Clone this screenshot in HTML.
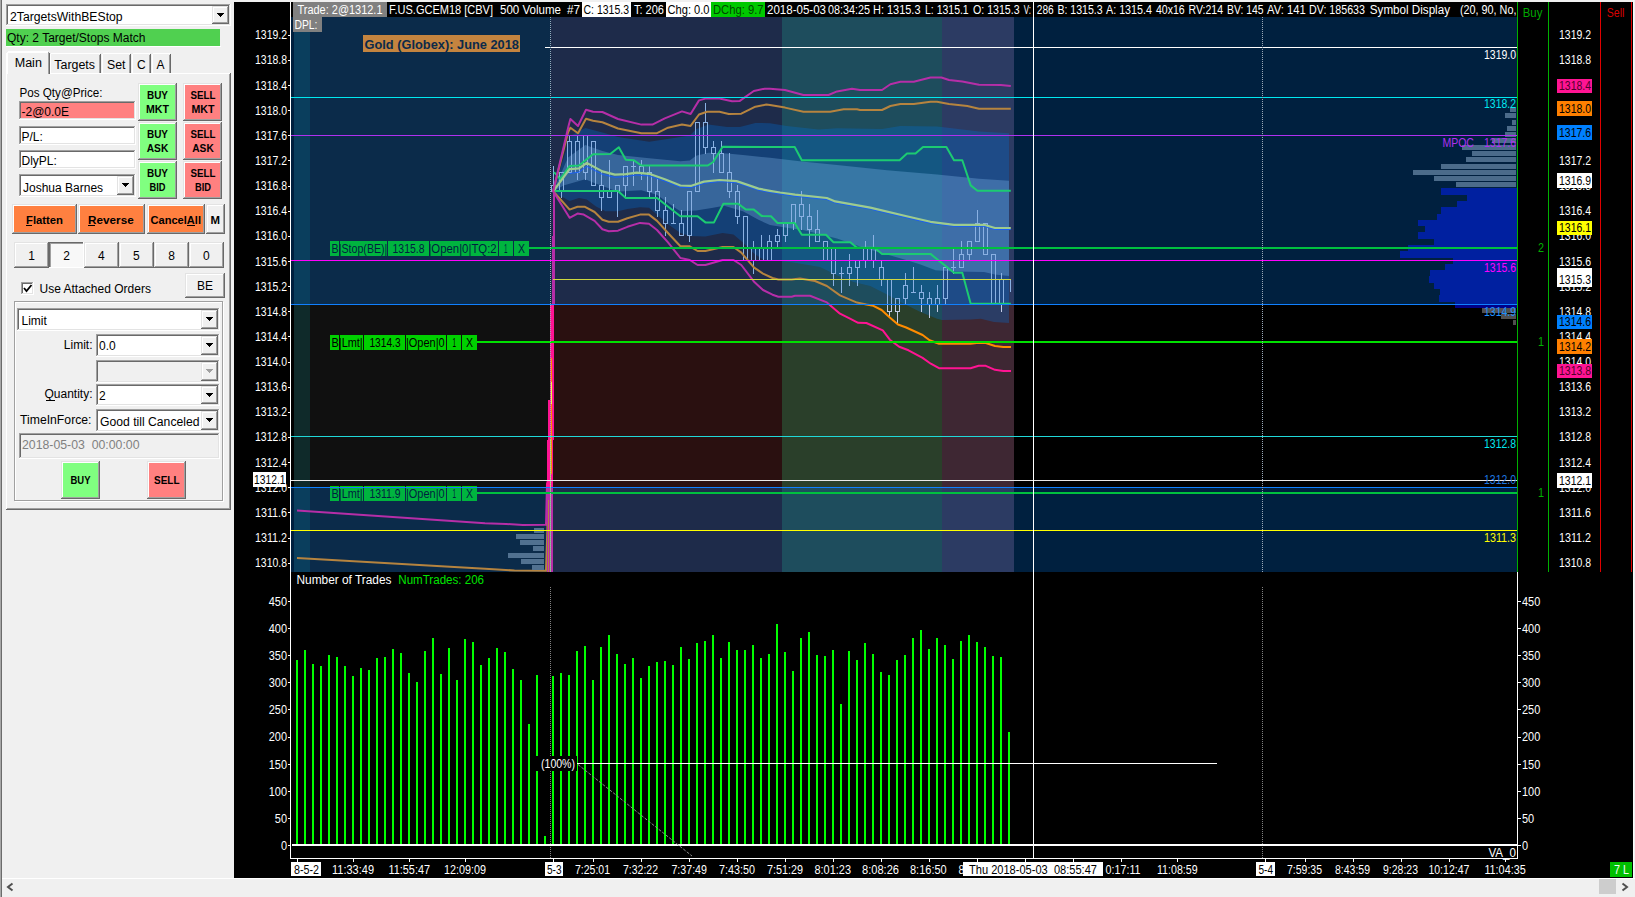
<!DOCTYPE html>
<html lang="en"><head><meta charset="utf-8"><title>Chart Trade</title>
<style>html,body{margin:0;padding:0;background:#f0f0f0;overflow:hidden}body{width:1635px;height:897px;position:relative}svg{position:absolute;left:0;top:0;display:block}text{font-family:"Liberation Sans", sans-serif;white-space:pre}</style></head><body>
<svg width="1635" height="897" viewBox="0 0 1635 897">
<rect x="0" y="0" width="1635" height="897" fill="#f0f0f0"/>
<g shape-rendering="crispEdges">
<rect x="6" y="4" width="225" height="22" fill="#fff"/>
<rect x="6" y="4" width="225" height="1" fill="#a0a0a0"/>
<rect x="6" y="4" width="1" height="22" fill="#a0a0a0"/>
<rect x="7" y="5" width="223" height="1" fill="#696969"/>
<rect x="7" y="5" width="1" height="20" fill="#696969"/>
<rect x="6" y="25" width="225" height="1" fill="#ffffff"/>
<rect x="230" y="4" width="1" height="22" fill="#ffffff"/>
<rect x="7" y="24" width="223" height="1" fill="#e3e3e3"/>
<rect x="229" y="5" width="1" height="20" fill="#e3e3e3"/>
<rect x="212" y="6" width="17" height="18" fill="#f0f0f0"/>
<rect x="212" y="6" width="17" height="1" fill="#e3e3e3"/>
<rect x="212" y="6" width="1" height="18" fill="#e3e3e3"/>
<rect x="213" y="7" width="15" height="1" fill="#ffffff"/>
<rect x="213" y="7" width="1" height="16" fill="#ffffff"/>
<rect x="212" y="23" width="17" height="1" fill="#696969"/>
<rect x="228" y="6" width="1" height="18" fill="#696969"/>
<rect x="213" y="22" width="15" height="1" fill="#a0a0a0"/>
<rect x="227" y="7" width="1" height="16" fill="#a0a0a0"/>
<rect x="217" y="13" width="7" height="1" fill="#000"/>
<rect x="218" y="14" width="5" height="1" fill="#000"/>
<rect x="219" y="15" width="3" height="1" fill="#000"/>
<rect x="220" y="16" width="1" height="1" fill="#000"/>
<rect x="6" y="29" width="214" height="17" fill="#50d050"/>
<rect x="6" y="46" width="215" height="1" fill="#ffffff"/>
<rect x="51" y="53" width="49" height="1" fill="#ffffff"/>
<rect x="50" y="54" width="1" height="19" fill="#ffffff"/>
<rect x="100" y="54" width="1" height="19" fill="#696969"/>
<rect x="99" y="55" width="1" height="18" fill="#a0a0a0"/>
<rect x="103" y="53" width="27" height="1" fill="#ffffff"/>
<rect x="102" y="54" width="1" height="19" fill="#ffffff"/>
<rect x="130" y="54" width="1" height="19" fill="#696969"/>
<rect x="129" y="55" width="1" height="18" fill="#a0a0a0"/>
<rect x="133" y="53" width="17" height="1" fill="#ffffff"/>
<rect x="132" y="54" width="1" height="19" fill="#ffffff"/>
<rect x="150" y="54" width="1" height="19" fill="#696969"/>
<rect x="149" y="55" width="1" height="18" fill="#a0a0a0"/>
<rect x="153" y="53" width="17" height="1" fill="#ffffff"/>
<rect x="152" y="54" width="1" height="19" fill="#ffffff"/>
<rect x="170" y="54" width="1" height="19" fill="#696969"/>
<rect x="169" y="55" width="1" height="18" fill="#a0a0a0"/>
<rect x="6" y="73" width="225" height="1" fill="#ffffff"/>
<rect x="6" y="73" width="1" height="437" fill="#ffffff"/>
<rect x="230" y="73" width="1" height="437" fill="#696969"/>
<rect x="229" y="74" width="1" height="435" fill="#a0a0a0"/>
<rect x="6" y="509" width="225" height="1" fill="#696969"/>
<rect x="7" y="508" width="223" height="1" fill="#a0a0a0"/>
<rect x="6" y="51" width="44" height="23" fill="#f0f0f0"/>
<rect x="8" y="51" width="40" height="1" fill="#ffffff"/>
<rect x="6" y="53" width="1" height="21" fill="#ffffff"/>
<rect x="7" y="52" width="1" height="22" fill="#ffffff"/>
<rect x="7" y="52" width="41" height="1" fill="#ffffff"/>
<rect x="49" y="53" width="1" height="21" fill="#696969"/>
<rect x="48" y="52" width="1" height="22" fill="#a0a0a0"/>
<rect x="19" y="101" width="117" height="19" fill="#ff8080"/>
<rect x="19" y="101" width="117" height="1" fill="#a0a0a0"/>
<rect x="19" y="101" width="1" height="19" fill="#a0a0a0"/>
<rect x="20" y="102" width="115" height="1" fill="#696969"/>
<rect x="20" y="102" width="1" height="17" fill="#696969"/>
<rect x="19" y="119" width="117" height="1" fill="#ffffff"/>
<rect x="135" y="101" width="1" height="19" fill="#ffffff"/>
<rect x="20" y="118" width="115" height="1" fill="#e3e3e3"/>
<rect x="134" y="102" width="1" height="17" fill="#e3e3e3"/>
<rect x="19" y="126" width="117" height="19" fill="#fff"/>
<rect x="19" y="126" width="117" height="1" fill="#a0a0a0"/>
<rect x="19" y="126" width="1" height="19" fill="#a0a0a0"/>
<rect x="20" y="127" width="115" height="1" fill="#696969"/>
<rect x="20" y="127" width="1" height="17" fill="#696969"/>
<rect x="19" y="144" width="117" height="1" fill="#ffffff"/>
<rect x="135" y="126" width="1" height="19" fill="#ffffff"/>
<rect x="20" y="143" width="115" height="1" fill="#e3e3e3"/>
<rect x="134" y="127" width="1" height="17" fill="#e3e3e3"/>
<rect x="19" y="150" width="117" height="19" fill="#fff"/>
<rect x="19" y="150" width="117" height="1" fill="#a0a0a0"/>
<rect x="19" y="150" width="1" height="19" fill="#a0a0a0"/>
<rect x="20" y="151" width="115" height="1" fill="#696969"/>
<rect x="20" y="151" width="1" height="17" fill="#696969"/>
<rect x="19" y="168" width="117" height="1" fill="#ffffff"/>
<rect x="135" y="150" width="1" height="19" fill="#ffffff"/>
<rect x="20" y="167" width="115" height="1" fill="#e3e3e3"/>
<rect x="134" y="151" width="1" height="17" fill="#e3e3e3"/>
<rect x="19" y="174" width="117" height="23" fill="#fff"/>
<rect x="19" y="174" width="117" height="1" fill="#a0a0a0"/>
<rect x="19" y="174" width="1" height="23" fill="#a0a0a0"/>
<rect x="20" y="175" width="115" height="1" fill="#696969"/>
<rect x="20" y="175" width="1" height="21" fill="#696969"/>
<rect x="19" y="196" width="117" height="1" fill="#ffffff"/>
<rect x="135" y="174" width="1" height="23" fill="#ffffff"/>
<rect x="20" y="195" width="115" height="1" fill="#e3e3e3"/>
<rect x="134" y="175" width="1" height="21" fill="#e3e3e3"/>
<rect x="117" y="176" width="17" height="19" fill="#f0f0f0"/>
<rect x="117" y="176" width="17" height="1" fill="#e3e3e3"/>
<rect x="117" y="176" width="1" height="19" fill="#e3e3e3"/>
<rect x="118" y="177" width="15" height="1" fill="#ffffff"/>
<rect x="118" y="177" width="1" height="17" fill="#ffffff"/>
<rect x="117" y="194" width="17" height="1" fill="#696969"/>
<rect x="133" y="176" width="1" height="19" fill="#696969"/>
<rect x="118" y="193" width="15" height="1" fill="#a0a0a0"/>
<rect x="132" y="177" width="1" height="17" fill="#a0a0a0"/>
<rect x="122" y="183" width="7" height="1" fill="#000"/>
<rect x="123" y="184" width="5" height="1" fill="#000"/>
<rect x="124" y="185" width="3" height="1" fill="#000"/>
<rect x="125" y="186" width="1" height="1" fill="#000"/>
<rect x="138" y="83" width="39" height="38" fill="#80ff80"/>
<rect x="138" y="83" width="39" height="1" fill="#e3e3e3"/>
<rect x="138" y="83" width="1" height="38" fill="#e3e3e3"/>
<rect x="139" y="84" width="37" height="1" fill="#ffffff"/>
<rect x="139" y="84" width="1" height="36" fill="#ffffff"/>
<rect x="138" y="120" width="39" height="1" fill="#696969"/>
<rect x="176" y="83" width="1" height="38" fill="#696969"/>
<rect x="139" y="119" width="37" height="1" fill="#a0a0a0"/>
<rect x="175" y="84" width="1" height="36" fill="#a0a0a0"/>
<rect x="183" y="83" width="39" height="38" fill="#ff8080"/>
<rect x="183" y="83" width="39" height="1" fill="#e3e3e3"/>
<rect x="183" y="83" width="1" height="38" fill="#e3e3e3"/>
<rect x="184" y="84" width="37" height="1" fill="#ffffff"/>
<rect x="184" y="84" width="1" height="36" fill="#ffffff"/>
<rect x="183" y="120" width="39" height="1" fill="#696969"/>
<rect x="221" y="83" width="1" height="38" fill="#696969"/>
<rect x="184" y="119" width="37" height="1" fill="#a0a0a0"/>
<rect x="220" y="84" width="1" height="36" fill="#a0a0a0"/>
<rect x="138" y="122" width="39" height="38" fill="#80ff80"/>
<rect x="138" y="122" width="39" height="1" fill="#e3e3e3"/>
<rect x="138" y="122" width="1" height="38" fill="#e3e3e3"/>
<rect x="139" y="123" width="37" height="1" fill="#ffffff"/>
<rect x="139" y="123" width="1" height="36" fill="#ffffff"/>
<rect x="138" y="159" width="39" height="1" fill="#696969"/>
<rect x="176" y="122" width="1" height="38" fill="#696969"/>
<rect x="139" y="158" width="37" height="1" fill="#a0a0a0"/>
<rect x="175" y="123" width="1" height="36" fill="#a0a0a0"/>
<rect x="183" y="122" width="39" height="38" fill="#ff8080"/>
<rect x="183" y="122" width="39" height="1" fill="#e3e3e3"/>
<rect x="183" y="122" width="1" height="38" fill="#e3e3e3"/>
<rect x="184" y="123" width="37" height="1" fill="#ffffff"/>
<rect x="184" y="123" width="1" height="36" fill="#ffffff"/>
<rect x="183" y="159" width="39" height="1" fill="#696969"/>
<rect x="221" y="122" width="1" height="38" fill="#696969"/>
<rect x="184" y="158" width="37" height="1" fill="#a0a0a0"/>
<rect x="220" y="123" width="1" height="36" fill="#a0a0a0"/>
<rect x="138" y="161" width="39" height="38" fill="#80ff80"/>
<rect x="138" y="161" width="39" height="1" fill="#e3e3e3"/>
<rect x="138" y="161" width="1" height="38" fill="#e3e3e3"/>
<rect x="139" y="162" width="37" height="1" fill="#ffffff"/>
<rect x="139" y="162" width="1" height="36" fill="#ffffff"/>
<rect x="138" y="198" width="39" height="1" fill="#696969"/>
<rect x="176" y="161" width="1" height="38" fill="#696969"/>
<rect x="139" y="197" width="37" height="1" fill="#a0a0a0"/>
<rect x="175" y="162" width="1" height="36" fill="#a0a0a0"/>
<rect x="183" y="161" width="39" height="38" fill="#ff8080"/>
<rect x="183" y="161" width="39" height="1" fill="#e3e3e3"/>
<rect x="183" y="161" width="1" height="38" fill="#e3e3e3"/>
<rect x="184" y="162" width="37" height="1" fill="#ffffff"/>
<rect x="184" y="162" width="1" height="36" fill="#ffffff"/>
<rect x="183" y="198" width="39" height="1" fill="#696969"/>
<rect x="221" y="161" width="1" height="38" fill="#696969"/>
<rect x="184" y="197" width="37" height="1" fill="#a0a0a0"/>
<rect x="220" y="162" width="1" height="36" fill="#a0a0a0"/>
<rect x="12" y="204" width="65" height="30" fill="#ff8040"/>
<rect x="12" y="204" width="65" height="1" fill="#e3e3e3"/>
<rect x="12" y="204" width="1" height="30" fill="#e3e3e3"/>
<rect x="13" y="205" width="63" height="1" fill="#ffffff"/>
<rect x="13" y="205" width="1" height="28" fill="#ffffff"/>
<rect x="12" y="233" width="65" height="1" fill="#696969"/>
<rect x="76" y="204" width="1" height="30" fill="#696969"/>
<rect x="13" y="232" width="63" height="1" fill="#a0a0a0"/>
<rect x="75" y="205" width="1" height="28" fill="#a0a0a0"/>
<rect x="78" y="204" width="67" height="30" fill="#ff8040"/>
<rect x="78" y="204" width="67" height="1" fill="#e3e3e3"/>
<rect x="78" y="204" width="1" height="30" fill="#e3e3e3"/>
<rect x="79" y="205" width="65" height="1" fill="#ffffff"/>
<rect x="79" y="205" width="1" height="28" fill="#ffffff"/>
<rect x="78" y="233" width="67" height="1" fill="#696969"/>
<rect x="144" y="204" width="1" height="30" fill="#696969"/>
<rect x="79" y="232" width="65" height="1" fill="#a0a0a0"/>
<rect x="143" y="205" width="1" height="28" fill="#a0a0a0"/>
<rect x="147" y="204" width="58" height="30" fill="#ff8040"/>
<rect x="147" y="204" width="58" height="1" fill="#e3e3e3"/>
<rect x="147" y="204" width="1" height="30" fill="#e3e3e3"/>
<rect x="148" y="205" width="56" height="1" fill="#ffffff"/>
<rect x="148" y="205" width="1" height="28" fill="#ffffff"/>
<rect x="147" y="233" width="58" height="1" fill="#696969"/>
<rect x="204" y="204" width="1" height="30" fill="#696969"/>
<rect x="148" y="232" width="56" height="1" fill="#a0a0a0"/>
<rect x="203" y="205" width="1" height="28" fill="#a0a0a0"/>
<rect x="206" y="204" width="19" height="30" fill="#f0f0f0"/>
<rect x="206" y="204" width="19" height="1" fill="#e3e3e3"/>
<rect x="206" y="204" width="1" height="30" fill="#e3e3e3"/>
<rect x="207" y="205" width="17" height="1" fill="#ffffff"/>
<rect x="207" y="205" width="1" height="28" fill="#ffffff"/>
<rect x="206" y="233" width="19" height="1" fill="#696969"/>
<rect x="224" y="204" width="1" height="30" fill="#696969"/>
<rect x="207" y="232" width="17" height="1" fill="#a0a0a0"/>
<rect x="223" y="205" width="1" height="28" fill="#a0a0a0"/>
<rect x="14" y="242" width="35" height="26" fill="#f0f0f0"/>
<rect x="14" y="242" width="35" height="1" fill="#e3e3e3"/>
<rect x="14" y="242" width="1" height="26" fill="#e3e3e3"/>
<rect x="15" y="243" width="33" height="1" fill="#ffffff"/>
<rect x="15" y="243" width="1" height="24" fill="#ffffff"/>
<rect x="14" y="267" width="35" height="1" fill="#696969"/>
<rect x="48" y="242" width="1" height="26" fill="#696969"/>
<rect x="15" y="266" width="33" height="1" fill="#a0a0a0"/>
<rect x="47" y="243" width="1" height="24" fill="#a0a0a0"/>
<rect x="49" y="242" width="35" height="26" fill="#f8f8f8"/>
<rect x="49" y="242" width="35" height="1" fill="#696969"/>
<rect x="49" y="242" width="1" height="26" fill="#696969"/>
<rect x="50" y="243" width="33" height="1" fill="#a0a0a0"/>
<rect x="50" y="243" width="1" height="24" fill="#a0a0a0"/>
<rect x="49" y="267" width="35" height="1" fill="#ffffff"/>
<rect x="83" y="242" width="1" height="26" fill="#ffffff"/>
<rect x="84" y="242" width="35" height="26" fill="#f0f0f0"/>
<rect x="84" y="242" width="35" height="1" fill="#e3e3e3"/>
<rect x="84" y="242" width="1" height="26" fill="#e3e3e3"/>
<rect x="85" y="243" width="33" height="1" fill="#ffffff"/>
<rect x="85" y="243" width="1" height="24" fill="#ffffff"/>
<rect x="84" y="267" width="35" height="1" fill="#696969"/>
<rect x="118" y="242" width="1" height="26" fill="#696969"/>
<rect x="85" y="266" width="33" height="1" fill="#a0a0a0"/>
<rect x="117" y="243" width="1" height="24" fill="#a0a0a0"/>
<rect x="119" y="242" width="35" height="26" fill="#f0f0f0"/>
<rect x="119" y="242" width="35" height="1" fill="#e3e3e3"/>
<rect x="119" y="242" width="1" height="26" fill="#e3e3e3"/>
<rect x="120" y="243" width="33" height="1" fill="#ffffff"/>
<rect x="120" y="243" width="1" height="24" fill="#ffffff"/>
<rect x="119" y="267" width="35" height="1" fill="#696969"/>
<rect x="153" y="242" width="1" height="26" fill="#696969"/>
<rect x="120" y="266" width="33" height="1" fill="#a0a0a0"/>
<rect x="152" y="243" width="1" height="24" fill="#a0a0a0"/>
<rect x="154" y="242" width="35" height="26" fill="#f0f0f0"/>
<rect x="154" y="242" width="35" height="1" fill="#e3e3e3"/>
<rect x="154" y="242" width="1" height="26" fill="#e3e3e3"/>
<rect x="155" y="243" width="33" height="1" fill="#ffffff"/>
<rect x="155" y="243" width="1" height="24" fill="#ffffff"/>
<rect x="154" y="267" width="35" height="1" fill="#696969"/>
<rect x="188" y="242" width="1" height="26" fill="#696969"/>
<rect x="155" y="266" width="33" height="1" fill="#a0a0a0"/>
<rect x="187" y="243" width="1" height="24" fill="#a0a0a0"/>
<rect x="189" y="242" width="35" height="26" fill="#f0f0f0"/>
<rect x="189" y="242" width="35" height="1" fill="#e3e3e3"/>
<rect x="189" y="242" width="1" height="26" fill="#e3e3e3"/>
<rect x="190" y="243" width="33" height="1" fill="#ffffff"/>
<rect x="190" y="243" width="1" height="24" fill="#ffffff"/>
<rect x="189" y="267" width="35" height="1" fill="#696969"/>
<rect x="223" y="242" width="1" height="26" fill="#696969"/>
<rect x="190" y="266" width="33" height="1" fill="#a0a0a0"/>
<rect x="222" y="243" width="1" height="24" fill="#a0a0a0"/>
<rect x="21" y="282" width="13" height="13" fill="#fff"/>
<rect x="21" y="282" width="13" height="1" fill="#a0a0a0"/>
<rect x="21" y="282" width="1" height="13" fill="#a0a0a0"/>
<rect x="22" y="283" width="11" height="1" fill="#696969"/>
<rect x="22" y="283" width="1" height="11" fill="#696969"/>
<rect x="21" y="294" width="13" height="1" fill="#ffffff"/>
<rect x="33" y="282" width="1" height="13" fill="#ffffff"/>
<rect x="22" y="293" width="11" height="1" fill="#e3e3e3"/>
<rect x="32" y="283" width="1" height="11" fill="#e3e3e3"/>
<rect x="185" y="273" width="40" height="25" fill="#f0f0f0"/>
<rect x="185" y="273" width="40" height="1" fill="#e3e3e3"/>
<rect x="185" y="273" width="1" height="25" fill="#e3e3e3"/>
<rect x="186" y="274" width="38" height="1" fill="#ffffff"/>
<rect x="186" y="274" width="1" height="23" fill="#ffffff"/>
<rect x="185" y="297" width="40" height="1" fill="#696969"/>
<rect x="224" y="273" width="1" height="25" fill="#696969"/>
<rect x="186" y="296" width="38" height="1" fill="#a0a0a0"/>
<rect x="223" y="274" width="1" height="23" fill="#a0a0a0"/>
<rect x="15" y="302" width="209" height="1" fill="#ffffff"/>
<rect x="15" y="501" width="209" height="1" fill="#ffffff"/>
<rect x="15" y="302" width="1" height="200" fill="#ffffff"/>
<rect x="223" y="302" width="1" height="200" fill="#ffffff"/>
<rect x="14" y="301" width="209" height="1" fill="#a0a0a0"/>
<rect x="14" y="500" width="209" height="1" fill="#a0a0a0"/>
<rect x="14" y="301" width="1" height="200" fill="#a0a0a0"/>
<rect x="222" y="301" width="1" height="200" fill="#a0a0a0"/>
<rect x="17" y="308" width="203" height="23" fill="#fff"/>
<rect x="17" y="308" width="203" height="1" fill="#a0a0a0"/>
<rect x="17" y="308" width="1" height="23" fill="#a0a0a0"/>
<rect x="18" y="309" width="201" height="1" fill="#696969"/>
<rect x="18" y="309" width="1" height="21" fill="#696969"/>
<rect x="17" y="330" width="203" height="1" fill="#ffffff"/>
<rect x="219" y="308" width="1" height="23" fill="#ffffff"/>
<rect x="18" y="329" width="201" height="1" fill="#e3e3e3"/>
<rect x="218" y="309" width="1" height="21" fill="#e3e3e3"/>
<rect x="201" y="310" width="17" height="19" fill="#f0f0f0"/>
<rect x="201" y="310" width="17" height="1" fill="#e3e3e3"/>
<rect x="201" y="310" width="1" height="19" fill="#e3e3e3"/>
<rect x="202" y="311" width="15" height="1" fill="#ffffff"/>
<rect x="202" y="311" width="1" height="17" fill="#ffffff"/>
<rect x="201" y="328" width="17" height="1" fill="#696969"/>
<rect x="217" y="310" width="1" height="19" fill="#696969"/>
<rect x="202" y="327" width="15" height="1" fill="#a0a0a0"/>
<rect x="216" y="311" width="1" height="17" fill="#a0a0a0"/>
<rect x="206" y="317" width="7" height="1" fill="#000"/>
<rect x="207" y="318" width="5" height="1" fill="#000"/>
<rect x="208" y="319" width="3" height="1" fill="#000"/>
<rect x="209" y="320" width="1" height="1" fill="#000"/>
<rect x="96" y="334" width="124" height="23" fill="#fff"/>
<rect x="96" y="334" width="124" height="1" fill="#a0a0a0"/>
<rect x="96" y="334" width="1" height="23" fill="#a0a0a0"/>
<rect x="97" y="335" width="122" height="1" fill="#696969"/>
<rect x="97" y="335" width="1" height="21" fill="#696969"/>
<rect x="96" y="356" width="124" height="1" fill="#ffffff"/>
<rect x="219" y="334" width="1" height="23" fill="#ffffff"/>
<rect x="97" y="355" width="122" height="1" fill="#e3e3e3"/>
<rect x="218" y="335" width="1" height="21" fill="#e3e3e3"/>
<rect x="201" y="336" width="17" height="19" fill="#f0f0f0"/>
<rect x="201" y="336" width="17" height="1" fill="#e3e3e3"/>
<rect x="201" y="336" width="1" height="19" fill="#e3e3e3"/>
<rect x="202" y="337" width="15" height="1" fill="#ffffff"/>
<rect x="202" y="337" width="1" height="17" fill="#ffffff"/>
<rect x="201" y="354" width="17" height="1" fill="#696969"/>
<rect x="217" y="336" width="1" height="19" fill="#696969"/>
<rect x="202" y="353" width="15" height="1" fill="#a0a0a0"/>
<rect x="216" y="337" width="1" height="17" fill="#a0a0a0"/>
<rect x="206" y="343" width="7" height="1" fill="#000"/>
<rect x="207" y="344" width="5" height="1" fill="#000"/>
<rect x="208" y="345" width="3" height="1" fill="#000"/>
<rect x="209" y="346" width="1" height="1" fill="#000"/>
<rect x="96" y="360" width="124" height="23" fill="#f0f0f0"/>
<rect x="96" y="360" width="124" height="1" fill="#a0a0a0"/>
<rect x="96" y="360" width="1" height="23" fill="#a0a0a0"/>
<rect x="97" y="361" width="122" height="1" fill="#696969"/>
<rect x="97" y="361" width="1" height="21" fill="#696969"/>
<rect x="96" y="382" width="124" height="1" fill="#ffffff"/>
<rect x="219" y="360" width="1" height="23" fill="#ffffff"/>
<rect x="97" y="381" width="122" height="1" fill="#e3e3e3"/>
<rect x="218" y="361" width="1" height="21" fill="#e3e3e3"/>
<rect x="201" y="362" width="17" height="19" fill="#f0f0f0"/>
<rect x="201" y="362" width="17" height="1" fill="#e3e3e3"/>
<rect x="201" y="362" width="1" height="19" fill="#e3e3e3"/>
<rect x="202" y="363" width="15" height="1" fill="#ffffff"/>
<rect x="202" y="363" width="1" height="17" fill="#ffffff"/>
<rect x="201" y="380" width="17" height="1" fill="#696969"/>
<rect x="217" y="362" width="1" height="19" fill="#696969"/>
<rect x="202" y="379" width="15" height="1" fill="#a0a0a0"/>
<rect x="216" y="363" width="1" height="17" fill="#a0a0a0"/>
<rect x="206" y="369" width="7" height="1" fill="#a0a0a0"/>
<rect x="207" y="370" width="5" height="1" fill="#a0a0a0"/>
<rect x="208" y="371" width="3" height="1" fill="#a0a0a0"/>
<rect x="209" y="372" width="1" height="1" fill="#a0a0a0"/>
<rect x="96" y="384" width="124" height="22" fill="#fff"/>
<rect x="96" y="384" width="124" height="1" fill="#a0a0a0"/>
<rect x="96" y="384" width="1" height="22" fill="#a0a0a0"/>
<rect x="97" y="385" width="122" height="1" fill="#696969"/>
<rect x="97" y="385" width="1" height="20" fill="#696969"/>
<rect x="96" y="405" width="124" height="1" fill="#ffffff"/>
<rect x="219" y="384" width="1" height="22" fill="#ffffff"/>
<rect x="97" y="404" width="122" height="1" fill="#e3e3e3"/>
<rect x="218" y="385" width="1" height="20" fill="#e3e3e3"/>
<rect x="201" y="386" width="17" height="18" fill="#f0f0f0"/>
<rect x="201" y="386" width="17" height="1" fill="#e3e3e3"/>
<rect x="201" y="386" width="1" height="18" fill="#e3e3e3"/>
<rect x="202" y="387" width="15" height="1" fill="#ffffff"/>
<rect x="202" y="387" width="1" height="16" fill="#ffffff"/>
<rect x="201" y="403" width="17" height="1" fill="#696969"/>
<rect x="217" y="386" width="1" height="18" fill="#696969"/>
<rect x="202" y="402" width="15" height="1" fill="#a0a0a0"/>
<rect x="216" y="387" width="1" height="16" fill="#a0a0a0"/>
<rect x="206" y="393" width="7" height="1" fill="#000"/>
<rect x="207" y="394" width="5" height="1" fill="#000"/>
<rect x="208" y="395" width="3" height="1" fill="#000"/>
<rect x="209" y="396" width="1" height="1" fill="#000"/>
<rect x="96" y="409" width="124" height="23" fill="#fff"/>
<rect x="96" y="409" width="124" height="1" fill="#a0a0a0"/>
<rect x="96" y="409" width="1" height="23" fill="#a0a0a0"/>
<rect x="97" y="410" width="122" height="1" fill="#696969"/>
<rect x="97" y="410" width="1" height="21" fill="#696969"/>
<rect x="96" y="431" width="124" height="1" fill="#ffffff"/>
<rect x="219" y="409" width="1" height="23" fill="#ffffff"/>
<rect x="97" y="430" width="122" height="1" fill="#e3e3e3"/>
<rect x="218" y="410" width="1" height="21" fill="#e3e3e3"/>
<rect x="201" y="411" width="17" height="19" fill="#f0f0f0"/>
<rect x="201" y="411" width="17" height="1" fill="#e3e3e3"/>
<rect x="201" y="411" width="1" height="19" fill="#e3e3e3"/>
<rect x="202" y="412" width="15" height="1" fill="#ffffff"/>
<rect x="202" y="412" width="1" height="17" fill="#ffffff"/>
<rect x="201" y="429" width="17" height="1" fill="#696969"/>
<rect x="217" y="411" width="1" height="19" fill="#696969"/>
<rect x="202" y="428" width="15" height="1" fill="#a0a0a0"/>
<rect x="216" y="412" width="1" height="17" fill="#a0a0a0"/>
<rect x="206" y="418" width="7" height="1" fill="#000"/>
<rect x="207" y="419" width="5" height="1" fill="#000"/>
<rect x="208" y="420" width="3" height="1" fill="#000"/>
<rect x="209" y="421" width="1" height="1" fill="#000"/>
<rect x="19" y="433" width="201" height="26" fill="#f0f0f0"/>
<rect x="19" y="433" width="201" height="1" fill="#a0a0a0"/>
<rect x="19" y="433" width="1" height="26" fill="#a0a0a0"/>
<rect x="20" y="434" width="199" height="1" fill="#696969"/>
<rect x="20" y="434" width="1" height="24" fill="#696969"/>
<rect x="19" y="458" width="201" height="1" fill="#ffffff"/>
<rect x="219" y="433" width="1" height="26" fill="#ffffff"/>
<rect x="20" y="457" width="199" height="1" fill="#e3e3e3"/>
<rect x="218" y="434" width="1" height="24" fill="#e3e3e3"/>
<rect x="61" y="461" width="39" height="38" fill="#80ff80"/>
<rect x="61" y="461" width="39" height="1" fill="#e3e3e3"/>
<rect x="61" y="461" width="1" height="38" fill="#e3e3e3"/>
<rect x="62" y="462" width="37" height="1" fill="#ffffff"/>
<rect x="62" y="462" width="1" height="36" fill="#ffffff"/>
<rect x="61" y="498" width="39" height="1" fill="#696969"/>
<rect x="99" y="461" width="1" height="38" fill="#696969"/>
<rect x="62" y="497" width="37" height="1" fill="#a0a0a0"/>
<rect x="98" y="462" width="1" height="36" fill="#a0a0a0"/>
<rect x="147" y="461" width="39" height="38" fill="#ff8080"/>
<rect x="147" y="461" width="39" height="1" fill="#e3e3e3"/>
<rect x="147" y="461" width="1" height="38" fill="#e3e3e3"/>
<rect x="148" y="462" width="37" height="1" fill="#ffffff"/>
<rect x="148" y="462" width="1" height="36" fill="#ffffff"/>
<rect x="147" y="498" width="39" height="1" fill="#696969"/>
<rect x="185" y="461" width="1" height="38" fill="#696969"/>
<rect x="148" y="497" width="37" height="1" fill="#a0a0a0"/>
<rect x="184" y="462" width="1" height="36" fill="#a0a0a0"/>
<rect x="0" y="878" width="1635" height="19" fill="#f0f0f0"/>
<rect x="1599" y="879" width="17" height="15" fill="#cdcdcd"/>
<rect x="0" y="878" width="1635" height="1" fill="#ffffff"/>
<rect x="1633" y="0" width="1" height="878" fill="#fafafa"/>
<rect x="0" y="0" width="1" height="897" fill="#a8a8a8"/>
<rect x="1" y="0" width="1" height="897" fill="#6c6c6c"/>
</g>
<path d="M24 288 l2.5 3 l5 -6" stroke="#000" stroke-width="1.8" fill="none"/>
<path d="M12.5 883.5 l-4.5 3.5 l4.5 3.5" stroke="#505050" stroke-width="2" fill="none"/>
<path d="M1622.5 883.5 l4.5 3.5 l-4.5 3.5" stroke="#505050" stroke-width="2" fill="none"/>
<text x="10" y="21" fill="#000000" font-size="12" textLength="112.6" lengthAdjust="spacingAndGlyphs">2TargetsWithBEStop</text>
<text x="7" y="42" fill="#000000" font-size="12">Qty: 2 Target/Stops Match</text>
<text x="14.7" y="67" fill="#000000" font-size="12" textLength="27.2" lengthAdjust="spacingAndGlyphs">Main</text>
<text x="54.3" y="69" fill="#000000" font-size="12" textLength="40.7" lengthAdjust="spacingAndGlyphs">Targets</text>
<text x="107" y="69" fill="#000000" font-size="12" textLength="18.5" lengthAdjust="spacingAndGlyphs">Set</text>
<text x="137" y="69" fill="#000000" font-size="12">C</text>
<text x="156.5" y="69" fill="#000000" font-size="12">A</text>
<text x="19.5" y="97" fill="#000000" font-size="12" textLength="83" lengthAdjust="spacingAndGlyphs">Pos Qty@Price:</text>
<text x="21.5" y="116" fill="#000000" font-size="12">-2@0.0E</text>
<text x="21.5" y="141" fill="#000000" font-size="12">P/L:</text>
<text x="21.5" y="165" fill="#000000" font-size="12">DlyPL:</text>
<text x="23" y="191.5" fill="#000000" font-size="12">Joshua Barnes</text>
<text x="157.5" y="99.2" fill="#000000" font-size="11" text-anchor="middle" font-weight="bold" textLength="21" lengthAdjust="spacingAndGlyphs">BUY</text>
<text x="157.5" y="112.8" fill="#000000" font-size="11" text-anchor="middle" font-weight="bold" textLength="23" lengthAdjust="spacingAndGlyphs">MKT</text>
<text x="203" y="99.2" fill="#000000" font-size="11" text-anchor="middle" font-weight="bold" textLength="25" lengthAdjust="spacingAndGlyphs">SELL</text>
<text x="203" y="112.8" fill="#000000" font-size="11" text-anchor="middle" font-weight="bold" textLength="23" lengthAdjust="spacingAndGlyphs">MKT</text>
<text x="157.5" y="138.2" fill="#000000" font-size="11" text-anchor="middle" font-weight="bold" textLength="21" lengthAdjust="spacingAndGlyphs">BUY</text>
<text x="157.5" y="151.79999999999998" fill="#000000" font-size="11" text-anchor="middle" font-weight="bold" textLength="21.5" lengthAdjust="spacingAndGlyphs">ASK</text>
<text x="203" y="138.2" fill="#000000" font-size="11" text-anchor="middle" font-weight="bold" textLength="25" lengthAdjust="spacingAndGlyphs">SELL</text>
<text x="203" y="151.79999999999998" fill="#000000" font-size="11" text-anchor="middle" font-weight="bold" textLength="21.5" lengthAdjust="spacingAndGlyphs">ASK</text>
<text x="157.5" y="177.2" fill="#000000" font-size="11" text-anchor="middle" font-weight="bold" textLength="21" lengthAdjust="spacingAndGlyphs">BUY</text>
<text x="157.5" y="190.79999999999998" fill="#000000" font-size="11" text-anchor="middle" font-weight="bold" textLength="16" lengthAdjust="spacingAndGlyphs">BID</text>
<text x="203" y="177.2" fill="#000000" font-size="11" text-anchor="middle" font-weight="bold" textLength="25" lengthAdjust="spacingAndGlyphs">SELL</text>
<text x="203" y="190.79999999999998" fill="#000000" font-size="11" text-anchor="middle" font-weight="bold" textLength="16" lengthAdjust="spacingAndGlyphs">BID</text>
<text x="26" y="223.5" fill="#000000" font-size="11.5" font-weight="bold" textLength="37" lengthAdjust="spacingAndGlyphs">Flatten</text>
<text x="88" y="223.5" fill="#000000" font-size="11.5" font-weight="bold" textLength="45.7" lengthAdjust="spacingAndGlyphs">Reverse</text>
<text x="150.5" y="223.5" fill="#000000" font-size="11.5" font-weight="bold" textLength="50.5" lengthAdjust="spacingAndGlyphs">CancelAll</text>
<text x="210.5" y="223.5" fill="#000000" font-size="11.5" font-weight="bold" textLength="9.5" lengthAdjust="spacingAndGlyphs">M</text>
<g shape-rendering="crispEdges">
<rect x="26" y="225" width="6" height="1" fill="#000000"/>
<rect x="88" y="225" width="7" height="1" fill="#000000"/>
<rect x="187" y="225" width="8" height="1" fill="#000000"/>
<rect x="46" y="400" width="9" height="1" fill="#000000"/>
</g>
<text x="31.6" y="259.8" fill="#000000" font-size="12" text-anchor="middle">1</text>
<text x="66.5" y="259.8" fill="#000000" font-size="12" text-anchor="middle">2</text>
<text x="101.4" y="259.8" fill="#000000" font-size="12" text-anchor="middle">4</text>
<text x="136.4" y="259.8" fill="#000000" font-size="12" text-anchor="middle">5</text>
<text x="171.5" y="259.8" fill="#000000" font-size="12" text-anchor="middle">8</text>
<text x="206.4" y="259.8" fill="#000000" font-size="12" text-anchor="middle">0</text>
<text x="39.5" y="293" fill="#000000" font-size="12">Use Attached Orders</text>
<text x="205" y="290" fill="#000000" font-size="12" text-anchor="middle">BE</text>
<text x="21.5" y="325" fill="#000000" font-size="12">Limit</text>
<text x="92.5" y="349.3" fill="#000000" font-size="12" text-anchor="end">Limit:</text>
<text x="99" y="350" fill="#000000" font-size="12">0.0</text>
<text x="92.5" y="398.4" fill="#000000" font-size="12" text-anchor="end">Quantity:</text>
<text x="99" y="399.5" fill="#000000" font-size="12">2</text>
<text x="20" y="424.3" fill="#000000" font-size="12" textLength="71.5" lengthAdjust="spacingAndGlyphs">TimeInForce:</text>
<text x="100" y="425.5" fill="#000000" font-size="12" textLength="99.5" lengthAdjust="spacingAndGlyphs">Good till Canceled</text>
<text x="22" y="449" fill="#808080" font-size="12" textLength="117.5" lengthAdjust="spacingAndGlyphs">2018-05-03  00:00:00</text>
<text x="80.5" y="484" fill="#000000" font-size="11" text-anchor="middle" font-weight="bold" textLength="20" lengthAdjust="spacingAndGlyphs">BUY</text>
<text x="166.8" y="484" fill="#000000" font-size="11" text-anchor="middle" font-weight="bold" textLength="25.5" lengthAdjust="spacingAndGlyphs">SELL</text>
<g shape-rendering="crispEdges">
<rect x="234" y="2" width="1399" height="876" fill="#000"/>
<rect x="294" y="17" width="16" height="555" fill="rgb(15,42,42)"/>
<rect x="310" y="17" width="241" height="555" fill="rgb(16,16,16)"/>
<rect x="551" y="17" width="231" height="555" fill="rgb(42,16,16)"/>
<rect x="782" y="17" width="160" height="555" fill="rgb(42,63,42)"/>
<rect x="942" y="17" width="72" height="555" fill="rgb(62,39,51)"/>
</g>
<clipPath id="cp"><rect x="291" y="17" width="1226" height="555"/></clipPath>
<g clip-path="url(#cp)">
<polygon points="553.0,191.7 563.0,160.0 571.2,135.5 585.3,128.0 602.4,132.4 618.0,137.1 649.2,141.8 680.4,137.1 689.8,135.5 696.0,129.3 708.5,124.6 727.3,127.0 739.8,127.0 755.4,123.0 770.0,123.2 786.7,126.0 818.5,129.4 837.0,128.2 882.0,128.9 900.4,126.0 937.0,126.5 954.0,128.5 979.0,131.5 1009.0,133.2 1009.0,323.0 1009.0,323.0 994.0,322.0 980.7,318.8 970.7,319.6 942.0,320.0 937.0,318.8 920.5,312.0 903.8,303.7 887.0,294.5 870.3,286.0 853.6,282.0 837.0,275.3 820.0,267.0 791.7,262.2 770.0,260.0 763.0,259.6 753.8,253.3 742.9,242.4 733.5,234.6 722.6,233.0 705.4,236.5 689.8,235.9 680.4,233.0 669.5,225.3 658.6,215.9 649.0,207.8 640.0,207.3 627.4,208.9 618.0,211.2 605.5,211.2 596.0,206.5 586.8,199.5 579.0,198.0 569.6,201.0 553.0,191.7" fill="rgba(0,112,220,0.30)"/>
<polygon points="553.0,191.7 568.0,157.4 585.3,144.9 602.4,151.1 618.0,155.0 649.2,158.2 680.4,161.3 689.8,160.5 696.0,155.8 708.5,152.7 727.3,153.5 742.9,155.0 770.0,157.8 801.8,161.6 837.0,165.0 887.0,170.3 937.0,174.5 979.0,178.7 1009.0,180.7 1009.0,276.0 1009.0,276.0 995.0,274.4 984.0,272.0 954.0,271.6 935.6,270.3 920.5,264.4 907.0,260.2 887.0,254.4 863.6,247.7 837.0,238.5 803.4,230.0 791.7,228.5 770.0,225.0 758.5,219.8 742.9,211.2 724.1,205.7 711.7,208.0 696.0,210.4 680.4,211.2 674.2,207.3 657.0,194.8 641.4,190.2 627.4,190.9 618.0,191.7 593.0,182.4 585.3,179.2 563.4,185.5 553.0,191.7" fill="rgba(190,225,255,0.30)"/>
<polyline points="297,510.4 485,523.2 506,524 522.7,525 546,524.8 547,484 551,470" fill="none" stroke="#ff1493" stroke-width="2"/>
<polyline points="297,558 485,568.8 514.5,570.5 546,570.7 547.5,525 551,500" fill="none" stroke="#ff8c00" stroke-width="2"/>
<g shape-rendering="crispEdges">
<rect x="553" y="191" width="2" height="45" fill="#ff1493"/>
<rect x="552" y="236" width="3" height="68" fill="#ff1493"/>
<rect x="550" y="304" width="4" height="96" fill="#ff1493"/>
<rect x="548" y="400" width="6" height="40" fill="#ff1493"/>
<rect x="547" y="440" width="6" height="132" fill="#ff1493"/>
<rect x="551" y="358" width="1" height="116" fill="#ff8c00"/>
<rect x="551" y="382" width="1" height="22" fill="#f0f040"/>
<rect x="550" y="440" width="1" height="132" fill="#c8e060"/>
<rect x="548" y="500" width="1" height="72" fill="#ff8c00"/>
</g>
<g shape-rendering="crispEdges" fill="#c2cce6">
<rect x="553" y="166" width="1" height="19"/>
<rect x="551" y="185" width="5" height="1"/>
<rect x="551" y="191" width="5" height="1"/>
<rect x="551" y="185" width="1" height="6"/>
<rect x="555" y="185" width="1" height="6"/>
<rect x="561" y="191" width="1" height="7"/>
<rect x="559" y="172" width="5" height="1"/>
<rect x="559" y="191" width="5" height="1"/>
<rect x="559" y="172" width="1" height="19"/>
<rect x="563" y="172" width="1" height="19"/>
<rect x="569" y="135" width="1" height="6"/>
<rect x="567" y="141" width="5" height="1"/>
<rect x="567" y="172" width="5" height="1"/>
<rect x="567" y="141" width="1" height="31"/>
<rect x="571" y="141" width="1" height="31"/>
<rect x="577" y="135" width="1" height="6"/>
<rect x="577" y="172" width="1" height="8"/>
<rect x="575" y="141" width="5" height="1"/>
<rect x="575" y="172" width="5" height="1"/>
<rect x="575" y="141" width="1" height="31"/>
<rect x="579" y="141" width="1" height="31"/>
<rect x="585" y="172" width="1" height="8"/>
<rect x="583" y="135" width="5" height="1"/>
<rect x="583" y="172" width="5" height="1"/>
<rect x="583" y="135" width="1" height="37"/>
<rect x="587" y="135" width="1" height="37"/>
<rect x="591" y="141" width="5" height="1"/>
<rect x="591" y="185" width="5" height="1"/>
<rect x="591" y="141" width="1" height="44"/>
<rect x="595" y="141" width="1" height="44"/>
<rect x="601" y="172" width="1" height="13"/>
<rect x="601" y="197" width="1" height="14"/>
<rect x="599" y="185" width="5" height="1"/>
<rect x="599" y="197" width="5" height="1"/>
<rect x="599" y="185" width="1" height="12"/>
<rect x="603" y="185" width="1" height="12"/>
<rect x="609" y="160" width="1" height="31"/>
<rect x="607" y="191" width="5" height="1"/>
<rect x="607" y="197" width="5" height="1"/>
<rect x="607" y="191" width="1" height="6"/>
<rect x="611" y="191" width="1" height="6"/>
<rect x="617" y="191" width="1" height="26"/>
<rect x="615" y="185" width="5" height="1"/>
<rect x="615" y="191" width="5" height="1"/>
<rect x="615" y="185" width="1" height="6"/>
<rect x="619" y="185" width="1" height="6"/>
<rect x="625" y="185" width="1" height="13"/>
<rect x="623" y="166" width="5" height="1"/>
<rect x="623" y="185" width="5" height="1"/>
<rect x="623" y="166" width="1" height="19"/>
<rect x="627" y="166" width="1" height="19"/>
<rect x="633" y="160" width="1" height="6"/>
<rect x="633" y="166" width="1" height="20"/>
<rect x="631" y="166" width="5" height="1"/>
<rect x="641" y="160" width="1" height="6"/>
<rect x="641" y="172" width="1" height="8"/>
<rect x="639" y="166" width="5" height="1"/>
<rect x="639" y="172" width="5" height="1"/>
<rect x="639" y="166" width="1" height="6"/>
<rect x="643" y="166" width="1" height="6"/>
<rect x="649" y="166" width="1" height="6"/>
<rect x="649" y="191" width="1" height="7"/>
<rect x="647" y="172" width="5" height="1"/>
<rect x="647" y="191" width="5" height="1"/>
<rect x="647" y="172" width="1" height="19"/>
<rect x="651" y="172" width="1" height="19"/>
<rect x="657" y="179" width="1" height="12"/>
<rect x="657" y="210" width="1" height="7"/>
<rect x="655" y="191" width="5" height="1"/>
<rect x="655" y="210" width="5" height="1"/>
<rect x="655" y="191" width="1" height="19"/>
<rect x="659" y="191" width="1" height="19"/>
<rect x="665" y="197" width="1" height="13"/>
<rect x="665" y="223" width="1" height="13"/>
<rect x="663" y="210" width="5" height="1"/>
<rect x="663" y="223" width="5" height="1"/>
<rect x="663" y="210" width="1" height="13"/>
<rect x="667" y="210" width="1" height="13"/>
<rect x="673" y="204" width="1" height="19"/>
<rect x="671" y="223" width="5" height="1"/>
<rect x="681" y="210" width="1" height="13"/>
<rect x="679" y="223" width="5" height="1"/>
<rect x="679" y="235" width="5" height="1"/>
<rect x="679" y="223" width="1" height="12"/>
<rect x="683" y="223" width="1" height="12"/>
<rect x="689" y="235" width="1" height="7"/>
<rect x="687" y="191" width="5" height="1"/>
<rect x="687" y="235" width="5" height="1"/>
<rect x="687" y="191" width="1" height="44"/>
<rect x="691" y="191" width="1" height="44"/>
<rect x="695" y="122" width="5" height="1"/>
<rect x="695" y="191" width="5" height="1"/>
<rect x="695" y="122" width="1" height="69"/>
<rect x="699" y="122" width="1" height="69"/>
<rect x="705" y="103" width="1" height="19"/>
<rect x="705" y="147" width="1" height="7"/>
<rect x="703" y="122" width="5" height="1"/>
<rect x="703" y="147" width="5" height="1"/>
<rect x="703" y="122" width="1" height="25"/>
<rect x="707" y="122" width="1" height="25"/>
<rect x="713" y="141" width="1" height="6"/>
<rect x="713" y="153" width="1" height="20"/>
<rect x="711" y="147" width="5" height="1"/>
<rect x="711" y="153" width="5" height="1"/>
<rect x="711" y="147" width="1" height="6"/>
<rect x="715" y="147" width="1" height="6"/>
<rect x="721" y="141" width="1" height="12"/>
<rect x="719" y="153" width="5" height="1"/>
<rect x="719" y="172" width="5" height="1"/>
<rect x="719" y="153" width="1" height="19"/>
<rect x="723" y="153" width="1" height="19"/>
<rect x="729" y="153" width="1" height="19"/>
<rect x="729" y="191" width="1" height="7"/>
<rect x="727" y="172" width="5" height="1"/>
<rect x="727" y="191" width="5" height="1"/>
<rect x="727" y="172" width="1" height="19"/>
<rect x="731" y="172" width="1" height="19"/>
<rect x="737" y="185" width="1" height="6"/>
<rect x="737" y="216" width="1" height="8"/>
<rect x="735" y="191" width="5" height="1"/>
<rect x="735" y="216" width="5" height="1"/>
<rect x="735" y="191" width="1" height="25"/>
<rect x="739" y="191" width="1" height="25"/>
<rect x="743" y="216" width="5" height="1"/>
<rect x="743" y="260" width="5" height="1"/>
<rect x="743" y="216" width="1" height="44"/>
<rect x="747" y="216" width="1" height="44"/>
<rect x="753" y="241" width="1" height="7"/>
<rect x="753" y="260" width="1" height="14"/>
<rect x="751" y="248" width="5" height="1"/>
<rect x="751" y="260" width="5" height="1"/>
<rect x="751" y="248" width="1" height="12"/>
<rect x="755" y="248" width="1" height="12"/>
<rect x="761" y="235" width="1" height="13"/>
<rect x="759" y="248" width="5" height="1"/>
<rect x="759" y="260" width="5" height="1"/>
<rect x="759" y="248" width="1" height="12"/>
<rect x="763" y="248" width="1" height="12"/>
<rect x="769" y="235" width="1" height="6"/>
<rect x="767" y="241" width="5" height="1"/>
<rect x="767" y="260" width="5" height="1"/>
<rect x="767" y="241" width="1" height="19"/>
<rect x="771" y="241" width="1" height="19"/>
<rect x="777" y="229" width="1" height="6"/>
<rect x="777" y="241" width="1" height="8"/>
<rect x="775" y="235" width="5" height="1"/>
<rect x="775" y="241" width="5" height="1"/>
<rect x="775" y="235" width="1" height="6"/>
<rect x="779" y="235" width="1" height="6"/>
<rect x="785" y="235" width="1" height="7"/>
<rect x="783" y="223" width="5" height="1"/>
<rect x="783" y="235" width="5" height="1"/>
<rect x="783" y="223" width="1" height="12"/>
<rect x="787" y="223" width="1" height="12"/>
<rect x="793" y="223" width="1" height="7"/>
<rect x="791" y="204" width="5" height="1"/>
<rect x="791" y="223" width="5" height="1"/>
<rect x="791" y="204" width="1" height="19"/>
<rect x="795" y="204" width="1" height="19"/>
<rect x="801" y="191" width="1" height="13"/>
<rect x="801" y="216" width="1" height="14"/>
<rect x="799" y="204" width="5" height="1"/>
<rect x="799" y="216" width="5" height="1"/>
<rect x="799" y="204" width="1" height="12"/>
<rect x="803" y="204" width="1" height="12"/>
<rect x="809" y="204" width="1" height="12"/>
<rect x="809" y="229" width="1" height="20"/>
<rect x="807" y="216" width="5" height="1"/>
<rect x="807" y="229" width="5" height="1"/>
<rect x="807" y="216" width="1" height="13"/>
<rect x="811" y="216" width="1" height="13"/>
<rect x="817" y="210" width="1" height="19"/>
<rect x="815" y="229" width="5" height="1"/>
<rect x="815" y="241" width="5" height="1"/>
<rect x="815" y="229" width="1" height="12"/>
<rect x="819" y="229" width="1" height="12"/>
<rect x="823" y="241" width="5" height="1"/>
<rect x="823" y="260" width="5" height="1"/>
<rect x="823" y="241" width="1" height="19"/>
<rect x="827" y="241" width="1" height="19"/>
<rect x="833" y="273" width="1" height="13"/>
<rect x="831" y="248" width="5" height="1"/>
<rect x="831" y="273" width="5" height="1"/>
<rect x="831" y="248" width="1" height="25"/>
<rect x="835" y="248" width="1" height="25"/>
<rect x="841" y="267" width="1" height="6"/>
<rect x="841" y="273" width="1" height="20"/>
<rect x="839" y="273" width="5" height="1"/>
<rect x="849" y="254" width="1" height="13"/>
<rect x="849" y="273" width="1" height="13"/>
<rect x="847" y="267" width="5" height="1"/>
<rect x="847" y="273" width="5" height="1"/>
<rect x="847" y="267" width="1" height="6"/>
<rect x="851" y="267" width="1" height="6"/>
<rect x="857" y="267" width="1" height="19"/>
<rect x="855" y="260" width="5" height="1"/>
<rect x="855" y="267" width="5" height="1"/>
<rect x="855" y="260" width="1" height="7"/>
<rect x="859" y="260" width="1" height="7"/>
<rect x="865" y="241" width="1" height="7"/>
<rect x="865" y="260" width="1" height="8"/>
<rect x="863" y="248" width="5" height="1"/>
<rect x="863" y="260" width="5" height="1"/>
<rect x="863" y="248" width="1" height="12"/>
<rect x="867" y="248" width="1" height="12"/>
<rect x="873" y="235" width="1" height="13"/>
<rect x="873" y="260" width="1" height="8"/>
<rect x="871" y="248" width="5" height="1"/>
<rect x="871" y="260" width="5" height="1"/>
<rect x="871" y="248" width="1" height="12"/>
<rect x="875" y="248" width="1" height="12"/>
<rect x="881" y="260" width="1" height="7"/>
<rect x="881" y="279" width="1" height="7"/>
<rect x="879" y="267" width="5" height="1"/>
<rect x="879" y="279" width="5" height="1"/>
<rect x="879" y="267" width="1" height="12"/>
<rect x="883" y="267" width="1" height="12"/>
<rect x="889" y="311" width="1" height="7"/>
<rect x="887" y="279" width="5" height="1"/>
<rect x="887" y="311" width="5" height="1"/>
<rect x="887" y="279" width="1" height="32"/>
<rect x="891" y="279" width="1" height="32"/>
<rect x="897" y="311" width="1" height="13"/>
<rect x="895" y="298" width="5" height="1"/>
<rect x="895" y="311" width="5" height="1"/>
<rect x="895" y="298" width="1" height="13"/>
<rect x="899" y="298" width="1" height="13"/>
<rect x="905" y="273" width="1" height="12"/>
<rect x="905" y="298" width="1" height="7"/>
<rect x="903" y="285" width="5" height="1"/>
<rect x="903" y="298" width="5" height="1"/>
<rect x="903" y="285" width="1" height="13"/>
<rect x="907" y="285" width="1" height="13"/>
<rect x="913" y="267" width="1" height="25"/>
<rect x="911" y="292" width="5" height="1"/>
<rect x="921" y="285" width="1" height="7"/>
<rect x="921" y="298" width="1" height="14"/>
<rect x="919" y="292" width="5" height="1"/>
<rect x="919" y="298" width="5" height="1"/>
<rect x="919" y="292" width="1" height="6"/>
<rect x="923" y="292" width="1" height="6"/>
<rect x="929" y="292" width="1" height="6"/>
<rect x="929" y="304" width="1" height="14"/>
<rect x="927" y="298" width="5" height="1"/>
<rect x="927" y="304" width="5" height="1"/>
<rect x="927" y="298" width="1" height="6"/>
<rect x="931" y="298" width="1" height="6"/>
<rect x="937" y="285" width="1" height="13"/>
<rect x="937" y="304" width="1" height="8"/>
<rect x="935" y="298" width="5" height="1"/>
<rect x="935" y="304" width="5" height="1"/>
<rect x="935" y="298" width="1" height="6"/>
<rect x="939" y="298" width="1" height="6"/>
<rect x="945" y="298" width="1" height="7"/>
<rect x="943" y="267" width="5" height="1"/>
<rect x="943" y="298" width="5" height="1"/>
<rect x="943" y="267" width="1" height="31"/>
<rect x="947" y="267" width="1" height="31"/>
<rect x="953" y="248" width="1" height="19"/>
<rect x="953" y="267" width="1" height="7"/>
<rect x="951" y="267" width="5" height="1"/>
<rect x="961" y="241" width="1" height="13"/>
<rect x="959" y="254" width="5" height="1"/>
<rect x="959" y="267" width="5" height="1"/>
<rect x="959" y="254" width="1" height="13"/>
<rect x="963" y="254" width="1" height="13"/>
<rect x="969" y="254" width="1" height="7"/>
<rect x="967" y="241" width="5" height="1"/>
<rect x="967" y="254" width="5" height="1"/>
<rect x="967" y="241" width="1" height="13"/>
<rect x="971" y="241" width="1" height="13"/>
<rect x="977" y="210" width="1" height="13"/>
<rect x="975" y="223" width="5" height="1"/>
<rect x="975" y="241" width="5" height="1"/>
<rect x="975" y="223" width="1" height="18"/>
<rect x="979" y="223" width="1" height="18"/>
<rect x="983" y="223" width="5" height="1"/>
<rect x="983" y="254" width="5" height="1"/>
<rect x="983" y="223" width="1" height="31"/>
<rect x="987" y="223" width="1" height="31"/>
<rect x="991" y="254" width="5" height="1"/>
<rect x="991" y="304" width="5" height="1"/>
<rect x="991" y="254" width="1" height="50"/>
<rect x="995" y="254" width="1" height="50"/>
<rect x="1001" y="273" width="1" height="6"/>
<rect x="1001" y="304" width="1" height="8"/>
<rect x="999" y="279" width="5" height="1"/>
<rect x="999" y="304" width="5" height="1"/>
<rect x="999" y="279" width="1" height="25"/>
<rect x="1003" y="279" width="1" height="25"/>
<rect x="1010" y="279" width="1" height="13"/>
</g>
<polyline points="554.0,172.2 560.3,179.2 569.6,166.0 579.0,165.5 593.0,154.3 610.2,154.0 618.8,147.2 625.8,159.7 633.6,160.2 641.4,165.5 707.8,165.5 713.2,162.0 722.6,146.8 794.7,147.0 801.8,160.3 899.6,160.3 907.0,153.6 915.5,153.6 923.0,147.0 946.4,147.0 954.0,160.3 962.3,160.3 970.7,185.4 977.4,190.7 1010.8,190.7" fill="none" stroke="#28f048" stroke-width="2" stroke-linejoin="round"/>
<polyline points="553.0,191.0 618.0,191.0 625.8,198.0 657.0,198.0 680.4,216.2 697.6,216.2 705.4,222.4 714.0,222.4 723.4,203.7 738.2,203.7 746.0,209.6 753.8,209.6 761.6,215.9 771.0,216.2 777.5,223.0 794.7,223.0 801.8,234.8 826.0,234.8 833.5,242.2 850.3,242.2 857.0,247.7 874.5,247.7 882.0,253.9 930.5,253.9 954.0,272.8 962.3,272.8 970.7,303.7 1010.8,303.7" fill="none" stroke="#28f048" stroke-width="2" stroke-linejoin="round"/>
<polyline points="569.6,173.5 579.0,172.2 586.8,166.4 602.4,174.4 614.9,177.3 625.8,176.6 636.8,175.0 649.2,175.9 664.8,181.1 680.4,187.3 691.4,187.6 703.9,183.3 719.5,181.6 736.6,182.7 758.5,190.2 770.0,192.4 780.0,194.0 795.0,196.2 826.9,199.5 835.2,202.9 870.3,209.1 908.8,218.3 930.5,223.3 954.0,226.3 984.0,226.3 995.0,229.5 1010.8,229.5" fill="none" stroke="#2458ff" stroke-width="1" stroke-linejoin="round"/>
<polyline points="553.0,191.7 569.6,169.1 579.0,168.3 586.8,162.9 602.4,171.4 614.9,174.6 625.8,174.2 636.8,172.7 649.2,173.8 664.8,179.2 680.4,185.5 691.4,185.8 703.9,181.6 719.5,180.0 736.6,181.1 758.5,188.6 770.0,190.8 780.0,192.5 795.0,194.7 826.9,198.0 835.2,201.4 870.3,207.6 908.8,216.8 930.5,221.8 954.0,224.8 984.0,224.8 995.0,228.0 1010.8,228.0" fill="none" stroke="#dcf070" stroke-width="2.2" stroke-linejoin="round"/>
<polyline points="553.0,191.7 568.0,132.4 570.4,127.7 578.0,133.2 586.0,118.7 593.0,120.7 602.4,122.3 618.0,128.5 641.4,133.2 657.0,133.2 668.0,127.7 682.0,124.6 690.6,125.9 699.0,114.5 707.0,111.8 719.5,111.8 728.8,114.0 741.3,113.7 755.4,106.7 766.3,104.6 770.0,105.0 785.0,107.6 803.4,111.8 830.2,111.8 843.6,109.3 857.0,109.3 860.0,110.0 882.0,110.0 890.4,106.0 900.4,104.0 913.8,104.0 930.5,101.8 937.0,101.8 949.0,104.0 967.3,106.0 979.0,108.8 1010.8,108.8" fill="none" stroke="#ff8c00" stroke-width="2" stroke-linejoin="round"/>
<polyline points="553.0,191.0 569.6,209.6 577.5,206.8 585.0,206.8 594.6,212.0 602.4,219.8 608.7,221.8 618.0,221.8 627.4,218.2 640.0,214.6 649.0,214.6 657.0,220.9 668.0,233.0 680.4,246.3 689.8,246.3 697.6,251.0 705.4,251.0 722.6,247.0 733.5,247.0 741.3,252.6 753.8,267.4 763.0,273.6 772.5,278.0 778.4,279.5 791.7,279.5 800.0,278.6 815.0,281.0 826.9,286.0 840.0,295.4 857.0,302.6 866.4,304.6 873.4,305.8 881.6,310.0 889.8,317.5 898.0,324.5 906.2,327.5 922.6,335.0 929.6,340.3 939.0,343.8 970.5,343.8 978.7,342.7 985.8,343.0 995.0,346.0 1003.3,347.0 1011.0,347.0" fill="none" stroke="#ff8c00" stroke-width="2" stroke-linejoin="round"/>
<polyline points="553.0,191.7 568.9,124.6 570.4,119.0 578.0,126.0 586.0,109.8 593.0,111.8 602.4,112.0 618.0,119.0 641.4,124.6 652.4,124.6 664.8,118.4 682.0,111.4 690.6,114.0 699.0,100.4 705.4,98.6 719.5,98.6 732.0,101.2 739.8,100.9 753.8,91.0 764.7,88.7 770.0,88.7 785.0,90.0 803.4,95.0 828.5,95.0 837.0,91.4 852.0,88.7 860.0,90.0 882.0,90.0 890.4,84.2 900.4,81.7 913.8,81.7 930.5,77.5 941.4,77.5 949.0,80.0 962.3,81.4 979.0,84.7 1000.8,85.0 1010.8,86.0" fill="none" stroke="#ff1493" stroke-width="2" stroke-linejoin="round"/>
<polyline points="553.0,191.0 569.6,217.8 577.5,213.6 583.7,214.6 594.6,220.9 602.4,229.2 608.7,231.2 618.0,230.7 627.4,226.8 640.0,222.9 649.0,223.7 657.0,230.0 668.0,242.4 680.4,258.0 689.8,260.0 697.6,265.0 705.4,265.0 722.6,260.0 733.5,260.0 741.3,265.0 753.8,281.4 763.0,290.0 772.5,294.7 778.4,296.7 791.7,296.7 795.0,295.7 810.0,295.7 826.9,302.4 840.0,313.7 850.0,318.7 858.2,322.8 866.4,323.0 882.8,330.4 889.8,339.7 899.2,346.8 908.5,350.3 922.6,357.9 930.8,363.7 939.0,368.2 970.5,368.2 978.7,365.8 985.8,365.8 995.0,369.8 1003.3,371.0 1011.0,371.0" fill="none" stroke="#ff1493" stroke-width="2" stroke-linejoin="round"/>
<g shape-rendering="crispEdges">
<rect x="534" y="528" width="10" height="5" fill="#727272"/>
<rect x="516" y="534" width="28" height="5" fill="#727272"/>
<rect x="520" y="540" width="24" height="5" fill="#727272"/>
<rect x="533" y="546" width="11" height="5" fill="#727272"/>
<rect x="508" y="553" width="36" height="5" fill="#727272"/>
<rect x="521" y="559" width="23" height="5" fill="#727272"/>
<rect x="532" y="565" width="12" height="5" fill="#727272"/>
<rect x="1510" y="107" width="6" height="5" fill="#696969"/>
<rect x="1505" y="113" width="11" height="5" fill="#696969"/>
<rect x="1512" y="120" width="4" height="5" fill="#696969"/>
<rect x="1507" y="126" width="9" height="5" fill="#696969"/>
<rect x="1505" y="132" width="11" height="5" fill="#696969"/>
<rect x="1492" y="138" width="24" height="5" fill="#696969"/>
<rect x="1462" y="145" width="54" height="5" fill="#696969"/>
<rect x="1472" y="151" width="44" height="5" fill="#696969"/>
<rect x="1466" y="157" width="50" height="5" fill="#696969"/>
<rect x="1441" y="164" width="75" height="5" fill="#696969"/>
<rect x="1413" y="170" width="103" height="5" fill="#696969"/>
<rect x="1434" y="176" width="82" height="5" fill="#696969"/>
<rect x="1456" y="182" width="60" height="5" fill="#696969"/>
<rect x="1441.0" y="188.4" width="76.0" height="6.5" fill="#000088"/>
<rect x="1467.0" y="194.7" width="50.0" height="6.5" fill="#000088"/>
<rect x="1457.0" y="201.0" width="60.0" height="6.5" fill="#000088"/>
<rect x="1441.0" y="207.3" width="76.0" height="6.5" fill="#000088"/>
<rect x="1437.0" y="213.6" width="80.0" height="6.5" fill="#000088"/>
<rect x="1418.0" y="219.9" width="99.0" height="6.5" fill="#000088"/>
<rect x="1425.0" y="226.1" width="92.0" height="6.5" fill="#000088"/>
<rect x="1418.0" y="232.4" width="99.0" height="6.5" fill="#000088"/>
<rect x="1434.0" y="238.7" width="83.0" height="6.5" fill="#000088"/>
<rect x="1407.8" y="245.0" width="109.2" height="6.5" fill="#000088"/>
<rect x="1400.0" y="251.3" width="117.0" height="6.5" fill="#000088"/>
<rect x="1452.8" y="257.6" width="64.2" height="6.5" fill="#000088"/>
<rect x="1445.0" y="263.8" width="72.0" height="6.5" fill="#000088"/>
<rect x="1430.0" y="270.1" width="87.0" height="6.5" fill="#000088"/>
<rect x="1429.0" y="276.4" width="88.0" height="6.5" fill="#000088"/>
<rect x="1434.0" y="282.7" width="83.0" height="6.5" fill="#000088"/>
<rect x="1440.0" y="289.0" width="77.0" height="6.5" fill="#000088"/>
<rect x="1439.0" y="295.3" width="78.0" height="6.5" fill="#000088"/>
<rect x="1455.0" y="301.6" width="62.0" height="6.5" fill="#000088"/>
<rect x="1482" y="308" width="34" height="5" fill="#505050"/>
<rect x="1501" y="314" width="15" height="5" fill="#505050"/>
<rect x="1513" y="320" width="3" height="5" fill="#505050"/>
<rect x="529" y="247" width="988" height="2" fill="#00e000"/>
<rect x="477" y="341" width="1040" height="2" fill="#00e000"/>
<rect x="477" y="492" width="1040" height="2" fill="#00e000"/>
<rect x="330" y="241" width="199" height="15" fill="#00d000"/>
<rect x="339" y="241" width="1" height="15" fill="rgb(16,16,16)"/>
<rect x="387" y="241" width="1" height="15" fill="rgb(16,16,16)"/>
<rect x="429" y="241" width="1" height="15" fill="rgb(16,16,16)"/>
<rect x="498" y="241" width="1" height="15" fill="rgb(16,16,16)"/>
<rect x="513" y="241" width="1" height="15" fill="rgb(16,16,16)"/>
<rect x="330" y="335" width="147" height="15" fill="#00d000"/>
<rect x="339" y="335" width="1" height="15" fill="rgb(16,16,16)"/>
<rect x="363" y="335" width="1" height="15" fill="rgb(16,16,16)"/>
<rect x="405" y="335" width="1" height="15" fill="rgb(16,16,16)"/>
<rect x="446" y="335" width="1" height="15" fill="rgb(16,16,16)"/>
<rect x="461" y="335" width="1" height="15" fill="rgb(16,16,16)"/>
<rect x="330" y="486" width="147" height="15" fill="#00d000"/>
<rect x="339" y="486" width="1" height="15" fill="rgb(16,16,16)"/>
<rect x="363" y="486" width="1" height="15" fill="rgb(16,16,16)"/>
<rect x="405" y="486" width="1" height="15" fill="rgb(16,16,16)"/>
<rect x="446" y="486" width="1" height="15" fill="rgb(16,16,16)"/>
<rect x="461" y="486" width="1" height="15" fill="rgb(16,16,16)"/>
</g>
<text x="331.6" y="253" fill="#000" font-size="12" textLength="55.8" lengthAdjust="spacingAndGlyphs">B|Stop(BE)|</text>
<text x="392.5" y="253" fill="#000" font-size="12" textLength="32" lengthAdjust="spacingAndGlyphs">1315.8</text>
<text x="428.4" y="253" fill="#000" font-size="12" textLength="68.3" lengthAdjust="spacingAndGlyphs">|Open|0|TQ:2</text>
<text x="504" y="253" fill="#000" font-size="12" textLength="3.5" lengthAdjust="spacingAndGlyphs">1</text>
<text x="518" y="253" fill="#000" font-size="12" textLength="7" lengthAdjust="spacingAndGlyphs">X</text>
<text x="331.5" y="347" fill="#000" font-size="12" textLength="31.2" lengthAdjust="spacingAndGlyphs">B|Lmt|</text>
<text x="369.4" y="347" fill="#000" font-size="12" textLength="31.2" lengthAdjust="spacingAndGlyphs">1314.3</text>
<text x="406" y="347" fill="#000" font-size="12" textLength="38.6" lengthAdjust="spacingAndGlyphs">|Open|0</text>
<text x="452.6" y="347" fill="#000" font-size="12" textLength="3.5" lengthAdjust="spacingAndGlyphs">1</text>
<text x="466" y="347" fill="#000" font-size="12" textLength="7" lengthAdjust="spacingAndGlyphs">X</text>
<text x="331.5" y="498" fill="#000" font-size="12" textLength="31.2" lengthAdjust="spacingAndGlyphs">B|Lmt|</text>
<text x="369.4" y="498" fill="#000" font-size="12" textLength="31.2" lengthAdjust="spacingAndGlyphs">1311.9</text>
<text x="406" y="498" fill="#000" font-size="12" textLength="38.6" lengthAdjust="spacingAndGlyphs">|Open|0</text>
<text x="452.6" y="498" fill="#000" font-size="12" textLength="3.5" lengthAdjust="spacingAndGlyphs">1</text>
<text x="466" y="498" fill="#000" font-size="12" textLength="7" lengthAdjust="spacingAndGlyphs">X</text>
<g shape-rendering="crispEdges">
<rect x="291" y="17" width="1226" height="288" fill="rgba(0,112,220,0.286)"/>
<rect x="291" y="487" width="1226" height="85" fill="rgba(0,112,220,0.286)"/>
</g>
</g>
<g shape-rendering="crispEdges">
<rect x="363" y="35" width="157" height="17" fill="#c4843f"/>
</g>
<text x="364.5" y="48.5" fill="#0b2a4a" font-size="13.5" font-weight="bold" textLength="154.5" lengthAdjust="spacingAndGlyphs">Gold (Globex): June 2018</text>
<g shape-rendering="crispEdges">
<rect x="545" y="47" width="972" height="1" fill="#ffffff"/>
<rect x="291" y="97" width="1226" height="1" fill="#00e8f0"/>
<rect x="291" y="135" width="1226" height="1" fill="#b030f0"/>
<rect x="291" y="260" width="1226" height="1" fill="#ff00ff"/>
<rect x="553" y="279" width="458" height="1" fill="#d0d840"/>
<rect x="291" y="304" width="1226" height="1" fill="#1080ff"/>
<rect x="291" y="436" width="1226" height="1" fill="#20d8d8"/>
<rect x="291" y="480" width="1226" height="1" fill="#e8e8e8"/>
<rect x="291" y="487" width="1226" height="1" fill="#1080ff"/>
<rect x="291" y="530" width="1226" height="1" fill="#ffff00"/>
</g>
<line x1="550.5" y1="17" x2="550.5" y2="572" stroke="#9aa8b8" stroke-width="1" stroke-dasharray="1,1" shape-rendering="crispEdges"/>
<line x1="550.5" y1="587" x2="550.5" y2="858" stroke="#808080" stroke-width="1" stroke-dasharray="1,1" shape-rendering="crispEdges"/>
<line x1="1262.5" y1="17" x2="1262.5" y2="572" stroke="#9aa8b8" stroke-width="1" stroke-dasharray="1,1" shape-rendering="crispEdges"/>
<line x1="1262.5" y1="587" x2="1262.5" y2="858" stroke="#808080" stroke-width="1" stroke-dasharray="1,1" shape-rendering="crispEdges"/>
<text x="1516" y="59" fill="#fff" font-size="12" text-anchor="end" textLength="32" lengthAdjust="spacingAndGlyphs">1319.0</text>
<text x="1516" y="108.3" fill="#00e8f0" font-size="12" text-anchor="end" textLength="32" lengthAdjust="spacingAndGlyphs">1318.2</text>
<text x="1442.4" y="146.7" fill="#b030f0" font-size="12" textLength="31.5" lengthAdjust="spacingAndGlyphs">MPOC</text>
<text x="1516" y="146.7" fill="#b030f0" font-size="12" text-anchor="end" textLength="32" lengthAdjust="spacingAndGlyphs">1317.6</text>
<text x="1516" y="272" fill="#ff00ff" font-size="12" text-anchor="end" textLength="32" lengthAdjust="spacingAndGlyphs">1315.6</text>
<text x="1516" y="316" fill="#1e90ff" font-size="12" text-anchor="end" textLength="32" lengthAdjust="spacingAndGlyphs">1314.9</text>
<text x="1516" y="448" fill="#00e8f0" font-size="12" text-anchor="end" textLength="32" lengthAdjust="spacingAndGlyphs">1312.8</text>
<text x="1516" y="484" fill="#1e78e0" font-size="12" text-anchor="end" textLength="32" lengthAdjust="spacingAndGlyphs">1312.0</text>
<text x="1516" y="542" fill="#ffff00" font-size="12" text-anchor="end" textLength="32" lengthAdjust="spacingAndGlyphs">1311.3</text>
<g shape-rendering="crispEdges">
<rect x="291" y="2" width="1226" height="15" fill="#000"/>
<rect x="293" y="2" width="94" height="15" fill="#808080"/>
<rect x="293" y="17" width="29" height="15" fill="#808080"/>
<rect x="582" y="2" width="49" height="15" fill="#fff"/>
<rect x="666" y="2" width="45" height="15" fill="#fff"/>
<rect x="711" y="2" width="54" height="15" fill="#00c800"/>
</g>
<text x="297.5" y="14" fill="#fff" font-size="12.5" textLength="85.0" lengthAdjust="spacingAndGlyphs">Trade: 2@1312.1</text>
<text x="389" y="14" fill="#fff" font-size="12.5" textLength="104" lengthAdjust="spacingAndGlyphs">F.US.GCEM18 [CBV]</text>
<text x="500" y="14" fill="#fff" font-size="12.5" textLength="61" lengthAdjust="spacingAndGlyphs">500 Volume</text>
<text x="567" y="14" fill="#fff" font-size="12.5" textLength="13" lengthAdjust="spacingAndGlyphs">#7</text>
<text x="583.5" y="14" fill="#000" font-size="12.5" textLength="45.5" lengthAdjust="spacingAndGlyphs">C: 1315.3</text>
<text x="634" y="14" fill="#fff" font-size="12.5" textLength="30" lengthAdjust="spacingAndGlyphs">T: 206</text>
<text x="667.5" y="14" fill="#000" font-size="12.5" textLength="42.0" lengthAdjust="spacingAndGlyphs">Chg: 0.0</text>
<text x="713" y="14" fill="#004800" font-size="12.5" textLength="50.5" lengthAdjust="spacingAndGlyphs">DChg: 9.7</text>
<text x="767" y="14" fill="#fff" font-size="12.5" textLength="59" lengthAdjust="spacingAndGlyphs">2018-05-03</text>
<text x="828" y="14" fill="#fff" font-size="12.5" textLength="42" lengthAdjust="spacingAndGlyphs">08:34:25</text>
<text x="873" y="14" fill="#fff" font-size="12.5" textLength="47.5" lengthAdjust="spacingAndGlyphs">H: 1315.3</text>
<text x="925" y="14" fill="#fff" font-size="12.5" textLength="43.7" lengthAdjust="spacingAndGlyphs">L: 1315.1</text>
<text x="973" y="14" fill="#fff" font-size="12.5" textLength="46.6" lengthAdjust="spacingAndGlyphs">O: 1315.3</text>
<text x="1023.8" y="14" fill="#fff" font-size="12.5" textLength="7.2" lengthAdjust="spacingAndGlyphs">V:</text>
<text x="1036.8" y="14" fill="#fff" font-size="12.5" textLength="16.9" lengthAdjust="spacingAndGlyphs">286</text>
<text x="1057.4" y="14" fill="#fff" font-size="12.5" textLength="45.3" lengthAdjust="spacingAndGlyphs">B: 1315.3</text>
<text x="1106" y="14" fill="#fff" font-size="12.5" textLength="46" lengthAdjust="spacingAndGlyphs">A: 1315.4</text>
<text x="1156" y="14" fill="#fff" font-size="12.5" textLength="28.6" lengthAdjust="spacingAndGlyphs">40x16</text>
<text x="1188.5" y="14" fill="#fff" font-size="12.5" textLength="34.5" lengthAdjust="spacingAndGlyphs">RV:214</text>
<text x="1227" y="14" fill="#fff" font-size="12.5" textLength="36.6" lengthAdjust="spacingAndGlyphs">BV: 145</text>
<text x="1267" y="14" fill="#fff" font-size="12.5" textLength="38.7" lengthAdjust="spacingAndGlyphs">AV: 141</text>
<text x="1309" y="14" fill="#fff" font-size="12.5" textLength="56" lengthAdjust="spacingAndGlyphs">DV: 185633</text>
<text x="1369.8" y="14" fill="#fff" font-size="12.5" textLength="80.2" lengthAdjust="spacingAndGlyphs">Symbol Display</text>
<text x="1460" y="14" fill="#fff" font-size="12.5" textLength="56.4" lengthAdjust="spacingAndGlyphs">(20, 90, No,</text>
<text x="294.5" y="29" fill="#fff" font-size="12.5" textLength="23" lengthAdjust="spacingAndGlyphs">DPL:</text>
<g shape-rendering="crispEdges">
<rect x="290" y="2" width="1" height="857" fill="#fff"/>
<rect x="1517" y="2" width="1" height="570" fill="#00b000"/>
<rect x="1548" y="2" width="1" height="570" fill="#00b000"/>
<rect x="1600" y="2" width="1" height="570" fill="#e00000"/>
<rect x="1631" y="2" width="1" height="570" fill="#e00000"/>
<rect x="1517" y="572" width="1" height="287" fill="#fff"/>
<rect x="288" y="35" width="2" height="1" fill="#fff"/>
<rect x="288" y="60" width="2" height="1" fill="#fff"/>
<rect x="288" y="85" width="2" height="1" fill="#fff"/>
<rect x="288" y="110" width="2" height="1" fill="#fff"/>
<rect x="288" y="135" width="2" height="1" fill="#fff"/>
<rect x="288" y="160" width="2" height="1" fill="#fff"/>
<rect x="288" y="186" width="2" height="1" fill="#fff"/>
<rect x="288" y="211" width="2" height="1" fill="#fff"/>
<rect x="288" y="236" width="2" height="1" fill="#fff"/>
<rect x="288" y="261" width="2" height="1" fill="#fff"/>
<rect x="288" y="286" width="2" height="1" fill="#fff"/>
<rect x="288" y="311" width="2" height="1" fill="#fff"/>
<rect x="288" y="336" width="2" height="1" fill="#fff"/>
<rect x="288" y="362" width="2" height="1" fill="#fff"/>
<rect x="288" y="387" width="2" height="1" fill="#fff"/>
<rect x="288" y="412" width="2" height="1" fill="#fff"/>
<rect x="288" y="437" width="2" height="1" fill="#fff"/>
<rect x="288" y="462" width="2" height="1" fill="#fff"/>
<rect x="288" y="487" width="2" height="1" fill="#fff"/>
<rect x="288" y="512" width="2" height="1" fill="#fff"/>
<rect x="288" y="538" width="2" height="1" fill="#fff"/>
<rect x="288" y="563" width="2" height="1" fill="#fff"/>
</g>
<text x="287" y="39.2" fill="#fff" font-size="12" text-anchor="end" textLength="32" lengthAdjust="spacingAndGlyphs">1319.2</text>
<text x="1559" y="39.2" fill="#fff" font-size="12" textLength="32" lengthAdjust="spacingAndGlyphs">1319.2</text>
<text x="287" y="64.3" fill="#fff" font-size="12" text-anchor="end" textLength="32" lengthAdjust="spacingAndGlyphs">1318.8</text>
<text x="1559" y="64.3" fill="#fff" font-size="12" textLength="32" lengthAdjust="spacingAndGlyphs">1318.8</text>
<text x="287" y="89.5" fill="#fff" font-size="12" text-anchor="end" textLength="32" lengthAdjust="spacingAndGlyphs">1318.4</text>
<text x="1559" y="89.5" fill="#fff" font-size="12" textLength="32" lengthAdjust="spacingAndGlyphs">1318.4</text>
<text x="287" y="114.6" fill="#fff" font-size="12" text-anchor="end" textLength="32" lengthAdjust="spacingAndGlyphs">1318.0</text>
<text x="1559" y="114.6" fill="#fff" font-size="12" textLength="32" lengthAdjust="spacingAndGlyphs">1318.0</text>
<text x="287" y="139.8" fill="#fff" font-size="12" text-anchor="end" textLength="32" lengthAdjust="spacingAndGlyphs">1317.6</text>
<text x="1559" y="139.8" fill="#fff" font-size="12" textLength="32" lengthAdjust="spacingAndGlyphs">1317.6</text>
<text x="287" y="164.9" fill="#fff" font-size="12" text-anchor="end" textLength="32" lengthAdjust="spacingAndGlyphs">1317.2</text>
<text x="1559" y="164.9" fill="#fff" font-size="12" textLength="32" lengthAdjust="spacingAndGlyphs">1317.2</text>
<text x="287" y="190.0" fill="#fff" font-size="12" text-anchor="end" textLength="32" lengthAdjust="spacingAndGlyphs">1316.8</text>
<text x="1559" y="190.0" fill="#fff" font-size="12" textLength="32" lengthAdjust="spacingAndGlyphs">1316.8</text>
<text x="287" y="215.2" fill="#fff" font-size="12" text-anchor="end" textLength="32" lengthAdjust="spacingAndGlyphs">1316.4</text>
<text x="1559" y="215.2" fill="#fff" font-size="12" textLength="32" lengthAdjust="spacingAndGlyphs">1316.4</text>
<text x="287" y="240.3" fill="#fff" font-size="12" text-anchor="end" textLength="32" lengthAdjust="spacingAndGlyphs">1316.0</text>
<text x="1559" y="240.3" fill="#fff" font-size="12" textLength="32" lengthAdjust="spacingAndGlyphs">1316.0</text>
<text x="287" y="265.5" fill="#fff" font-size="12" text-anchor="end" textLength="32" lengthAdjust="spacingAndGlyphs">1315.6</text>
<text x="1559" y="265.5" fill="#fff" font-size="12" textLength="32" lengthAdjust="spacingAndGlyphs">1315.6</text>
<text x="287" y="290.6" fill="#fff" font-size="12" text-anchor="end" textLength="32" lengthAdjust="spacingAndGlyphs">1315.2</text>
<text x="1559" y="290.6" fill="#fff" font-size="12" textLength="32" lengthAdjust="spacingAndGlyphs">1315.2</text>
<text x="287" y="315.7" fill="#fff" font-size="12" text-anchor="end" textLength="32" lengthAdjust="spacingAndGlyphs">1314.8</text>
<text x="1559" y="315.7" fill="#fff" font-size="12" textLength="32" lengthAdjust="spacingAndGlyphs">1314.8</text>
<text x="287" y="340.9" fill="#fff" font-size="12" text-anchor="end" textLength="32" lengthAdjust="spacingAndGlyphs">1314.4</text>
<text x="1559" y="340.9" fill="#fff" font-size="12" textLength="32" lengthAdjust="spacingAndGlyphs">1314.4</text>
<text x="287" y="366.0" fill="#fff" font-size="12" text-anchor="end" textLength="32" lengthAdjust="spacingAndGlyphs">1314.0</text>
<text x="1559" y="366.0" fill="#fff" font-size="12" textLength="32" lengthAdjust="spacingAndGlyphs">1314.0</text>
<text x="287" y="391.2" fill="#fff" font-size="12" text-anchor="end" textLength="32" lengthAdjust="spacingAndGlyphs">1313.6</text>
<text x="1559" y="391.2" fill="#fff" font-size="12" textLength="32" lengthAdjust="spacingAndGlyphs">1313.6</text>
<text x="287" y="416.3" fill="#fff" font-size="12" text-anchor="end" textLength="32" lengthAdjust="spacingAndGlyphs">1313.2</text>
<text x="1559" y="416.3" fill="#fff" font-size="12" textLength="32" lengthAdjust="spacingAndGlyphs">1313.2</text>
<text x="287" y="441.4" fill="#fff" font-size="12" text-anchor="end" textLength="32" lengthAdjust="spacingAndGlyphs">1312.8</text>
<text x="1559" y="441.4" fill="#fff" font-size="12" textLength="32" lengthAdjust="spacingAndGlyphs">1312.8</text>
<text x="287" y="466.6" fill="#fff" font-size="12" text-anchor="end" textLength="32" lengthAdjust="spacingAndGlyphs">1312.4</text>
<text x="1559" y="466.6" fill="#fff" font-size="12" textLength="32" lengthAdjust="spacingAndGlyphs">1312.4</text>
<text x="287" y="491.7" fill="#fff" font-size="12" text-anchor="end" textLength="32" lengthAdjust="spacingAndGlyphs">1312.0</text>
<text x="1559" y="491.7" fill="#fff" font-size="12" textLength="32" lengthAdjust="spacingAndGlyphs">1312.0</text>
<text x="287" y="516.9" fill="#fff" font-size="12" text-anchor="end" textLength="32" lengthAdjust="spacingAndGlyphs">1311.6</text>
<text x="1559" y="516.9" fill="#fff" font-size="12" textLength="32" lengthAdjust="spacingAndGlyphs">1311.6</text>
<text x="287" y="542.0" fill="#fff" font-size="12" text-anchor="end" textLength="32" lengthAdjust="spacingAndGlyphs">1311.2</text>
<text x="1559" y="542.0" fill="#fff" font-size="12" textLength="32" lengthAdjust="spacingAndGlyphs">1311.2</text>
<text x="287" y="567.1" fill="#fff" font-size="12" text-anchor="end" textLength="32" lengthAdjust="spacingAndGlyphs">1310.8</text>
<text x="1559" y="567.1" fill="#fff" font-size="12" textLength="32" lengthAdjust="spacingAndGlyphs">1310.8</text>
<text x="1522.8" y="17" fill="#00a800" font-size="12" textLength="19.5" lengthAdjust="spacingAndGlyphs">Buy</text>
<text x="1606.8" y="17" fill="#d80000" font-size="12" textLength="17.5" lengthAdjust="spacingAndGlyphs">Sell</text>
<text x="1538" y="252" fill="#00b000" font-size="12" textLength="6" lengthAdjust="spacingAndGlyphs">2</text>
<text x="1538" y="345.7" fill="#00b000" font-size="12" textLength="6" lengthAdjust="spacingAndGlyphs">1</text>
<text x="1538" y="496.7" fill="#00b000" font-size="12" textLength="6" lengthAdjust="spacingAndGlyphs">1</text>
<g shape-rendering="crispEdges">
<rect x="1557" y="79" width="35" height="14" fill="#ff1493"/>
<rect x="1557" y="101" width="35" height="15" fill="#ff8000"/>
<rect x="1557" y="125" width="35" height="15" fill="#0080ff"/>
<rect x="1557" y="173" width="35" height="15" fill="#ffffff"/>
<rect x="1557" y="221" width="35" height="14" fill="#ffff00"/>
<rect x="1557" y="268" width="35" height="19" fill="#ffffff"/>
<rect x="1557" y="315" width="35" height="14" fill="#0080ff"/>
<rect x="1557" y="339" width="35" height="15" fill="#ff8000"/>
<rect x="1557" y="364" width="35" height="14" fill="#ff1493"/>
<rect x="1557" y="473" width="35" height="15" fill="#ffffff"/>
<rect x="253" y="472" width="33" height="15" fill="#fff"/>
</g>
<text x="1559" y="90.4" fill="#50002a" font-size="12" textLength="32" lengthAdjust="spacingAndGlyphs">1318.4</text>
<text x="1559" y="112.9" fill="#000" font-size="12" textLength="32" lengthAdjust="spacingAndGlyphs">1318.0</text>
<text x="1559" y="136.9" fill="#000" font-size="12" textLength="32" lengthAdjust="spacingAndGlyphs">1317.6</text>
<text x="1559" y="184.9" fill="#000" font-size="12" textLength="32" lengthAdjust="spacingAndGlyphs">1316.9</text>
<text x="1559" y="232.4" fill="#000" font-size="12" textLength="32" lengthAdjust="spacingAndGlyphs">1316.1</text>
<text x="1559" y="283.8" fill="#000" font-size="12" textLength="32" lengthAdjust="spacingAndGlyphs">1315.3</text>
<text x="1559" y="326.4" fill="#000" font-size="12" textLength="32" lengthAdjust="spacingAndGlyphs">1314.6</text>
<text x="1559" y="350.9" fill="#000" font-size="12" textLength="32" lengthAdjust="spacingAndGlyphs">1314.2</text>
<text x="1559" y="375.4" fill="#50002a" font-size="12" textLength="32" lengthAdjust="spacingAndGlyphs">1313.8</text>
<text x="1559" y="484.9" fill="#000" font-size="12" textLength="32" lengthAdjust="spacingAndGlyphs">1312.1</text>
<text x="285.5" y="484.1" fill="#000" font-size="12" text-anchor="end" textLength="31.5" lengthAdjust="spacingAndGlyphs">1312.1</text>
<g shape-rendering="crispEdges">
<rect x="296" y="660" width="2" height="184" fill="#00ff00"/>
<rect x="304" y="650" width="2" height="194" fill="#00ff00"/>
<rect x="312" y="664" width="2" height="180" fill="#00ff00"/>
<rect x="320" y="666" width="2" height="178" fill="#00ff00"/>
<rect x="328" y="655" width="2" height="189" fill="#00ff00"/>
<rect x="336" y="657" width="2" height="187" fill="#00ff00"/>
<rect x="344" y="666" width="2" height="178" fill="#00ff00"/>
<rect x="352" y="676" width="2" height="168" fill="#00ff00"/>
<rect x="360" y="668" width="2" height="176" fill="#00ff00"/>
<rect x="368" y="670" width="2" height="174" fill="#00ff00"/>
<rect x="376" y="658" width="2" height="186" fill="#00ff00"/>
<rect x="384" y="657" width="2" height="187" fill="#00ff00"/>
<rect x="392" y="649" width="2" height="195" fill="#00ff00"/>
<rect x="400" y="653" width="2" height="191" fill="#00ff00"/>
<rect x="408" y="673" width="2" height="171" fill="#00ff00"/>
<rect x="416" y="682" width="2" height="162" fill="#00ff00"/>
<rect x="424" y="651" width="2" height="193" fill="#00ff00"/>
<rect x="432" y="638" width="2" height="206" fill="#00ff00"/>
<rect x="440" y="674" width="2" height="170" fill="#00ff00"/>
<rect x="448" y="648" width="2" height="196" fill="#00ff00"/>
<rect x="456" y="680" width="2" height="164" fill="#00ff00"/>
<rect x="464" y="639" width="2" height="205" fill="#00ff00"/>
<rect x="472" y="642" width="2" height="202" fill="#00ff00"/>
<rect x="480" y="665" width="2" height="179" fill="#00ff00"/>
<rect x="488" y="658" width="2" height="186" fill="#00ff00"/>
<rect x="496" y="648" width="2" height="196" fill="#00ff00"/>
<rect x="504" y="652" width="2" height="192" fill="#00ff00"/>
<rect x="512" y="669" width="2" height="175" fill="#00ff00"/>
<rect x="520" y="680" width="2" height="164" fill="#00ff00"/>
<rect x="528" y="724" width="2" height="120" fill="#00ff00"/>
<rect x="536" y="675" width="2" height="169" fill="#00ff00"/>
<rect x="544" y="836" width="2" height="8" fill="#00ff00"/>
<rect x="552" y="676" width="2" height="168" fill="#00ff00"/>
<rect x="560" y="673" width="2" height="171" fill="#00ff00"/>
<rect x="568" y="675" width="2" height="169" fill="#00ff00"/>
<rect x="576" y="651" width="2" height="193" fill="#00ff00"/>
<rect x="584" y="646" width="2" height="198" fill="#00ff00"/>
<rect x="592" y="680" width="2" height="164" fill="#00ff00"/>
<rect x="600" y="647" width="2" height="197" fill="#00ff00"/>
<rect x="608" y="635" width="2" height="209" fill="#00ff00"/>
<rect x="616" y="654" width="2" height="190" fill="#00ff00"/>
<rect x="624" y="664" width="2" height="180" fill="#00ff00"/>
<rect x="632" y="658" width="2" height="186" fill="#00ff00"/>
<rect x="640" y="678" width="2" height="166" fill="#00ff00"/>
<rect x="648" y="666" width="2" height="178" fill="#00ff00"/>
<rect x="656" y="662" width="2" height="182" fill="#00ff00"/>
<rect x="664" y="661" width="2" height="183" fill="#00ff00"/>
<rect x="672" y="665" width="2" height="179" fill="#00ff00"/>
<rect x="680" y="647" width="2" height="197" fill="#00ff00"/>
<rect x="688" y="659" width="2" height="185" fill="#00ff00"/>
<rect x="696" y="643" width="2" height="201" fill="#00ff00"/>
<rect x="704" y="641" width="2" height="203" fill="#00ff00"/>
<rect x="712" y="635" width="2" height="209" fill="#00ff00"/>
<rect x="720" y="658" width="2" height="186" fill="#00ff00"/>
<rect x="728" y="642" width="2" height="202" fill="#00ff00"/>
<rect x="736" y="650" width="2" height="194" fill="#00ff00"/>
<rect x="744" y="650" width="2" height="194" fill="#00ff00"/>
<rect x="752" y="645" width="2" height="199" fill="#00ff00"/>
<rect x="760" y="658" width="2" height="186" fill="#00ff00"/>
<rect x="768" y="654" width="2" height="190" fill="#00ff00"/>
<rect x="776" y="624" width="2" height="220" fill="#00ff00"/>
<rect x="784" y="652" width="2" height="192" fill="#00ff00"/>
<rect x="792" y="671" width="2" height="173" fill="#00ff00"/>
<rect x="800" y="638" width="2" height="206" fill="#00ff00"/>
<rect x="808" y="632" width="2" height="212" fill="#00ff00"/>
<rect x="816" y="655" width="2" height="189" fill="#00ff00"/>
<rect x="824" y="656" width="2" height="188" fill="#00ff00"/>
<rect x="832" y="650" width="2" height="194" fill="#00ff00"/>
<rect x="840" y="704" width="2" height="140" fill="#00ff00"/>
<rect x="848" y="651" width="2" height="193" fill="#00ff00"/>
<rect x="856" y="660" width="2" height="184" fill="#00ff00"/>
<rect x="864" y="643" width="2" height="201" fill="#00ff00"/>
<rect x="872" y="654" width="2" height="190" fill="#00ff00"/>
<rect x="880" y="672" width="2" height="172" fill="#00ff00"/>
<rect x="888" y="675" width="2" height="169" fill="#00ff00"/>
<rect x="896" y="660" width="2" height="184" fill="#00ff00"/>
<rect x="904" y="655" width="2" height="189" fill="#00ff00"/>
<rect x="912" y="638" width="2" height="206" fill="#00ff00"/>
<rect x="920" y="630" width="2" height="214" fill="#00ff00"/>
<rect x="928" y="649" width="2" height="195" fill="#00ff00"/>
<rect x="936" y="638" width="2" height="206" fill="#00ff00"/>
<rect x="944" y="645" width="2" height="199" fill="#00ff00"/>
<rect x="952" y="659" width="2" height="185" fill="#00ff00"/>
<rect x="960" y="641" width="2" height="203" fill="#00ff00"/>
<rect x="968" y="635" width="2" height="209" fill="#00ff00"/>
<rect x="976" y="642" width="2" height="202" fill="#00ff00"/>
<rect x="984" y="647" width="2" height="197" fill="#00ff00"/>
<rect x="992" y="656" width="2" height="188" fill="#00ff00"/>
<rect x="1000" y="657" width="2" height="187" fill="#00ff00"/>
<rect x="1008" y="732" width="2" height="112" fill="#00ff00"/>
<rect x="292" y="844" width="1225" height="2" fill="#fff"/>
<rect x="290" y="858" width="1228" height="1" fill="#fff"/>
<rect x="288" y="845" width="2" height="1" fill="#fff"/>
<rect x="1518" y="845" width="3" height="1" fill="#fff"/>
<rect x="288" y="818" width="2" height="1" fill="#fff"/>
<rect x="1518" y="818" width="3" height="1" fill="#fff"/>
<rect x="288" y="791" width="2" height="1" fill="#fff"/>
<rect x="1518" y="791" width="3" height="1" fill="#fff"/>
<rect x="288" y="764" width="2" height="1" fill="#fff"/>
<rect x="1518" y="764" width="3" height="1" fill="#fff"/>
<rect x="288" y="737" width="2" height="1" fill="#fff"/>
<rect x="1518" y="737" width="3" height="1" fill="#fff"/>
<rect x="288" y="709" width="2" height="1" fill="#fff"/>
<rect x="1518" y="709" width="3" height="1" fill="#fff"/>
<rect x="288" y="682" width="2" height="1" fill="#fff"/>
<rect x="1518" y="682" width="3" height="1" fill="#fff"/>
<rect x="288" y="655" width="2" height="1" fill="#fff"/>
<rect x="1518" y="655" width="3" height="1" fill="#fff"/>
<rect x="288" y="628" width="2" height="1" fill="#fff"/>
<rect x="1518" y="628" width="3" height="1" fill="#fff"/>
<rect x="288" y="601" width="2" height="1" fill="#fff"/>
<rect x="1518" y="601" width="3" height="1" fill="#fff"/>
<rect x="577" y="763" width="640" height="1" fill="#fff"/>
<rect x="536" y="756" width="41" height="15" fill="#000"/>
<rect x="297" y="859" width="1" height="3" fill="#fff"/>
<rect x="353" y="859" width="1" height="3" fill="#fff"/>
<rect x="409" y="859" width="1" height="3" fill="#fff"/>
<rect x="465" y="859" width="1" height="3" fill="#fff"/>
<rect x="553" y="859" width="1" height="3" fill="#fff"/>
<rect x="593" y="859" width="1" height="3" fill="#fff"/>
<rect x="641" y="859" width="1" height="3" fill="#fff"/>
<rect x="689" y="859" width="1" height="3" fill="#fff"/>
<rect x="737" y="859" width="1" height="3" fill="#fff"/>
<rect x="785" y="859" width="1" height="3" fill="#fff"/>
<rect x="833" y="859" width="1" height="3" fill="#fff"/>
<rect x="881" y="859" width="1" height="3" fill="#fff"/>
<rect x="929" y="859" width="1" height="3" fill="#fff"/>
<rect x="977" y="859" width="1" height="3" fill="#fff"/>
<rect x="1025" y="859" width="1" height="3" fill="#fff"/>
<rect x="1073" y="859" width="1" height="3" fill="#fff"/>
<rect x="1121" y="859" width="1" height="3" fill="#fff"/>
<rect x="1177" y="859" width="1" height="3" fill="#fff"/>
<rect x="1265" y="859" width="1" height="3" fill="#fff"/>
<rect x="1305" y="859" width="1" height="3" fill="#fff"/>
<rect x="1353" y="859" width="1" height="3" fill="#fff"/>
<rect x="1401" y="859" width="1" height="3" fill="#fff"/>
<rect x="1449" y="859" width="1" height="3" fill="#fff"/>
<rect x="1505" y="859" width="1" height="3" fill="#fff"/>
<rect x="291" y="862" width="30" height="14" fill="#fff"/>
<rect x="545" y="862" width="18" height="14" fill="#fff"/>
<rect x="1256" y="862" width="19" height="14" fill="#fff"/>
<rect x="1610" y="862" width="22" height="15" fill="#00c000"/>
<rect x="1033" y="2" width="1" height="857" fill="#fff"/>
</g>
<line x1="578" y1="764.5" x2="692" y2="856" stroke="#8c8c8c" stroke-width="1" stroke-dasharray="3,1.5"/>
<text x="296.5" y="584" fill="#fff" font-size="12" textLength="95" lengthAdjust="spacingAndGlyphs">Number of Trades</text>
<text x="398.3" y="584" fill="#00e400" font-size="12" textLength="85.7" lengthAdjust="spacingAndGlyphs">NumTrades: 206</text>
<text x="287" y="849.8" fill="#fff" font-size="12" text-anchor="end" textLength="6.1" lengthAdjust="spacingAndGlyphs">0</text>
<text x="1522" y="849.8" fill="#fff" font-size="12" textLength="6.1" lengthAdjust="spacingAndGlyphs">0</text>
<text x="287" y="822.7" fill="#fff" font-size="12" text-anchor="end" textLength="12.2" lengthAdjust="spacingAndGlyphs">50</text>
<text x="1522" y="822.7" fill="#fff" font-size="12" textLength="12.2" lengthAdjust="spacingAndGlyphs">50</text>
<text x="287" y="795.6" fill="#fff" font-size="12" text-anchor="end" textLength="18.299999999999997" lengthAdjust="spacingAndGlyphs">100</text>
<text x="1522" y="795.6" fill="#fff" font-size="12" textLength="18.299999999999997" lengthAdjust="spacingAndGlyphs">100</text>
<text x="287" y="768.5" fill="#fff" font-size="12" text-anchor="end" textLength="18.299999999999997" lengthAdjust="spacingAndGlyphs">150</text>
<text x="1522" y="768.5" fill="#fff" font-size="12" textLength="18.299999999999997" lengthAdjust="spacingAndGlyphs">150</text>
<text x="287" y="741.4" fill="#fff" font-size="12" text-anchor="end" textLength="18.299999999999997" lengthAdjust="spacingAndGlyphs">200</text>
<text x="1522" y="741.4" fill="#fff" font-size="12" textLength="18.299999999999997" lengthAdjust="spacingAndGlyphs">200</text>
<text x="287" y="714.3" fill="#fff" font-size="12" text-anchor="end" textLength="18.299999999999997" lengthAdjust="spacingAndGlyphs">250</text>
<text x="1522" y="714.3" fill="#fff" font-size="12" textLength="18.299999999999997" lengthAdjust="spacingAndGlyphs">250</text>
<text x="287" y="687.2" fill="#fff" font-size="12" text-anchor="end" textLength="18.299999999999997" lengthAdjust="spacingAndGlyphs">300</text>
<text x="1522" y="687.2" fill="#fff" font-size="12" textLength="18.299999999999997" lengthAdjust="spacingAndGlyphs">300</text>
<text x="287" y="660.1" fill="#fff" font-size="12" text-anchor="end" textLength="18.299999999999997" lengthAdjust="spacingAndGlyphs">350</text>
<text x="1522" y="660.1" fill="#fff" font-size="12" textLength="18.299999999999997" lengthAdjust="spacingAndGlyphs">350</text>
<text x="287" y="633.0" fill="#fff" font-size="12" text-anchor="end" textLength="18.299999999999997" lengthAdjust="spacingAndGlyphs">400</text>
<text x="1522" y="633.0" fill="#fff" font-size="12" textLength="18.299999999999997" lengthAdjust="spacingAndGlyphs">400</text>
<text x="287" y="605.9" fill="#fff" font-size="12" text-anchor="end" textLength="18.299999999999997" lengthAdjust="spacingAndGlyphs">450</text>
<text x="1522" y="605.9" fill="#fff" font-size="12" textLength="18.299999999999997" lengthAdjust="spacingAndGlyphs">450</text>
<text x="541" y="768.3" fill="#fff" font-size="12" textLength="34" lengthAdjust="spacingAndGlyphs">(100%)</text>
<text x="1516" y="856.5" fill="#fff" font-size="12" text-anchor="end" textLength="27.5" lengthAdjust="spacingAndGlyphs">VA_0</text>
<text x="294" y="874" fill="#000" font-size="12" textLength="25" lengthAdjust="spacingAndGlyphs">8-5-2</text>
<text x="332" y="874" fill="#fff" font-size="12" textLength="42" lengthAdjust="spacingAndGlyphs">11:33:49</text>
<text x="388.5" y="874" fill="#fff" font-size="12" textLength="41.5" lengthAdjust="spacingAndGlyphs">11:55:47</text>
<text x="444" y="874" fill="#fff" font-size="12" textLength="42" lengthAdjust="spacingAndGlyphs">12:09:09</text>
<text x="547" y="874" fill="#000" font-size="12" textLength="14.5" lengthAdjust="spacingAndGlyphs">5-3</text>
<text x="575" y="874" fill="#fff" font-size="12" textLength="35" lengthAdjust="spacingAndGlyphs">7:25:01</text>
<text x="623" y="874" fill="#fff" font-size="12" textLength="35" lengthAdjust="spacingAndGlyphs">7:32:22</text>
<text x="671.4" y="874" fill="#fff" font-size="12" textLength="35.6" lengthAdjust="spacingAndGlyphs">7:37:49</text>
<text x="719" y="874" fill="#fff" font-size="12" textLength="36" lengthAdjust="spacingAndGlyphs">7:43:50</text>
<text x="767" y="874" fill="#fff" font-size="12" textLength="36" lengthAdjust="spacingAndGlyphs">7:51:29</text>
<text x="814.5" y="874" fill="#fff" font-size="12" textLength="36.5" lengthAdjust="spacingAndGlyphs">8:01:23</text>
<text x="862" y="874" fill="#fff" font-size="12" textLength="37" lengthAdjust="spacingAndGlyphs">8:08:26</text>
<text x="910" y="874" fill="#fff" font-size="12" textLength="36.7" lengthAdjust="spacingAndGlyphs">8:16:50</text>
<text x="958.5" y="874" fill="#fff" font-size="12" textLength="35.5" lengthAdjust="spacingAndGlyphs">8:25:30</text>
<text x="1105.6" y="874" fill="#fff" font-size="12" textLength="34.9" lengthAdjust="spacingAndGlyphs">0:17:11</text>
<text x="1157" y="874" fill="#fff" font-size="12" textLength="40.6" lengthAdjust="spacingAndGlyphs">11:08:59</text>
<text x="1258.5" y="874" fill="#000" font-size="12" textLength="14.5" lengthAdjust="spacingAndGlyphs">5-4</text>
<text x="1287" y="874" fill="#fff" font-size="12" textLength="35" lengthAdjust="spacingAndGlyphs">7:59:35</text>
<text x="1335" y="874" fill="#fff" font-size="12" textLength="35" lengthAdjust="spacingAndGlyphs">8:43:59</text>
<text x="1383" y="874" fill="#fff" font-size="12" textLength="35" lengthAdjust="spacingAndGlyphs">9:28:23</text>
<text x="1428.4" y="874" fill="#fff" font-size="12" textLength="41.0" lengthAdjust="spacingAndGlyphs">10:12:47</text>
<text x="1484.4" y="874" fill="#fff" font-size="12" textLength="41.3" lengthAdjust="spacingAndGlyphs">11:04:35</text>
<rect x="963" y="862" width="140" height="14" fill="#fff" shape-rendering="crispEdges"/>
<text x="969" y="874" fill="#000" font-size="12" textLength="128" lengthAdjust="spacingAndGlyphs">Thu 2018-05-03  08:55:47</text>
<text x="1614" y="874" fill="#f0fff0" font-size="12" textLength="15" lengthAdjust="spacingAndGlyphs">7 L</text>
</svg></body></html>
